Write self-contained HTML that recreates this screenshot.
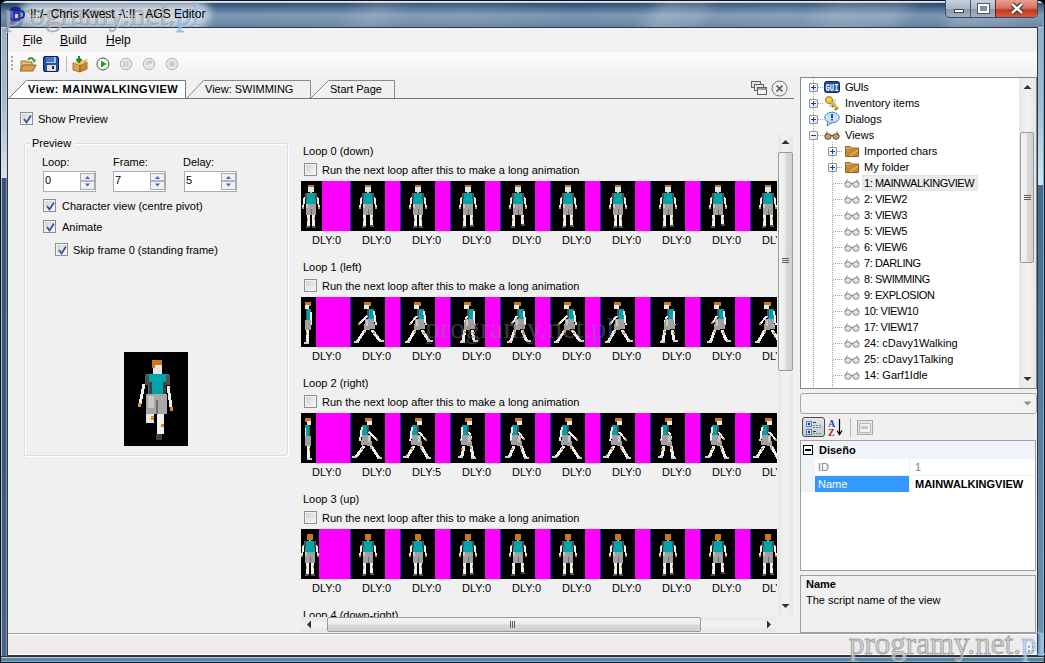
<!DOCTYPE html><html><head><meta charset="utf-8"><style>
*{margin:0;padding:0;box-sizing:border-box}
html,body{width:1045px;height:663px;overflow:hidden;background:#000}
body{font-family:"Liberation Sans",sans-serif;font-size:11px;color:#000;position:relative}
.a{position:absolute}
.t{position:absolute;white-space:nowrap;line-height:13px}
.b{font-weight:bold}
#frame{left:0;top:0;width:1045px;height:663px;border-radius:7px 7px 0 0;
background:linear-gradient(180deg,#2f4b69 0px,#4d6884 8px,#7890a8 18px,#8aa0b5 27px,#6f89a3 60%,#536e8c 100%);
border:1px solid #101820}
#glass{left:1px;top:1px;width:1043px;height:27px;border-radius:6px 6px 0 0;
background:linear-gradient(90deg,rgba(255,255,255,.0) 0%,rgba(255,255,255,.12) 8%,rgba(0,0,0,.05) 20%,rgba(255,255,255,.10) 35%,rgba(255,255,255,.18) 55%,rgba(0,20,40,.10) 70%,rgba(255,255,255,.15) 85%,rgba(255,255,255,.05) 100%)}
#client{left:7px;top:27px;width:1031px;height:629px;background:#f0f0f0;border:1px solid #2a3848}
.cb{position:absolute;width:13px;height:13px;border:1px solid #8f8f8f;background:#f4f4f4}
.cb i{position:absolute;left:1px;top:1px;width:9px;height:9px;background:linear-gradient(135deg,#cfd3d8,#f6f6f6)}
.cb svg{position:absolute;left:0;top:0}
.blk{position:absolute;top:0;height:50px;background:#000}
.nud{position:absolute;width:53px;height:21px;border:1px solid #a5acb5;background:#fff}
.nud .sp{position:absolute;right:1px;top:1px;width:15px;height:17px;border:1px solid #cdd2d7;background:linear-gradient(180deg,#f6f7f8,#e4e6e8)}
.pb{position:absolute;width:9px;height:9px;border:1px solid #959595;border-radius:1px;background:linear-gradient(135deg,#ffffff,#dfe3e8)}
.dv{position:absolute;width:1px;background-image:linear-gradient(180deg,#a0a0a0 50%,transparent 50%);background-size:1px 2px}
.dh{position:absolute;height:1px;background-image:linear-gradient(90deg,#a0a0a0 50%,transparent 50%);background-size:2px 1px}
.sbv{position:absolute;background:linear-gradient(90deg,#e6e6e6,#f0f0f0 40%,#f0f0f0 60%,#e6e6e6)}
.thumbv{position:absolute;border:1px solid #9a9a9a;border-radius:2px;background:linear-gradient(90deg,#f4f4f4 0%,#ececec 45%,#d8d8d8 55%,#d0d0d0 100%)}
.thumbh{position:absolute;border:1px solid #9a9a9a;border-radius:2px;background:linear-gradient(180deg,#f4f4f4 0%,#ececec 45%,#d8d8d8 55%,#d0d0d0 100%)}
</style></head><body>

<div class="a" style="left:0;top:0;width:1045px;height:663px;border-radius:7px 7px 0 0;background:#5a7592;border:1px solid #0c1620;overflow:hidden">
 <div class="a" style="left:0;top:0;width:1043px;height:27px;background:linear-gradient(180deg,#dce4ec 0px,#dce4ec 1px,#1c3c62 1px,#2a4a70 4px,#55759a 10px,#7290ae 14px,#6a88a6 19px,#5a7a9a 25px,#5a7a9a 26px,#c0d0e0 26px,#c0d0e0 27px)"></div>
 <div class="a" style="left:0;top:0;width:1043px;height:27px;background:linear-gradient(90deg,rgba(255,255,255,.0) 0%,rgba(255,255,255,.10) 30%,rgba(255,255,255,.14) 45%,rgba(255,255,255,.06) 55%,rgba(255,255,255,.16) 75%,rgba(255,255,255,.05) 90%,rgba(255,255,255,.12) 100%)"></div>
 <div class="a" style="left:0;top:0;width:1043px;height:27px;background:linear-gradient(120deg,transparent 0px,transparent 300px,rgba(255,255,255,.12) 330px,transparent 360px,transparent 560px,rgba(255,255,255,.2) 580px,rgba(255,255,255,.12) 610px,transparent 625px,transparent 700px,rgba(255,255,255,.15) 730px,rgba(255,255,255,.15) 780px,transparent 800px,transparent 820px,rgba(255,255,255,.18) 840px,rgba(255,255,255,.1) 880px,transparent 900px)"></div>
 <div class="a" style="left:0;top:0;width:1043px;height:27px;overflow:hidden"><div class="a" style="left:26px;top:7px;width:176px;height:13px;border-radius:6px;background:rgba(214,222,230,.9);box-shadow:0 0 9px 7px rgba(214,222,230,.85)"></div></div>
 <div class="a" style="left:0;top:27px;width:6px;height:150px;background:linear-gradient(180deg,#9cb0c6 0%,#a8bace 50%,#d8e2ea 100%)"></div>
 <div class="a" style="left:0;top:177px;width:6px;height:480px;background:linear-gradient(180deg,#3a5676,#3e5a7a 60%,#4a6686)"></div>
 <div class="a" style="left:0;top:27px;width:1px;height:630px;background:rgba(220,230,240,.7)"></div>
 <div class="a" style="left:5px;top:27px;width:1px;height:630px;background:rgba(200,215,230,.45)"></div>
 <div class="a" style="left:1036px;top:27px;width:1px;height:630px;background:rgba(200,215,230,.45)"></div>
 <div class="a" style="left:1037px;top:27px;width:6px;height:157px;background:linear-gradient(180deg,#98acc2 0%,#a8bace 50%,#dce4ec 100%)"></div>
 <div class="a" style="left:1037px;top:184px;width:6px;height:473px;background:linear-gradient(180deg,#4a6888,#5a7898 40%,#7890aa 100%)"></div>
 <div class="a" style="left:1042px;top:20px;width:1px;height:640px;background:#40c8ee"></div>
 <div class="a" style="left:0;top:655px;width:1043px;height:7px;background:linear-gradient(180deg,#2a3440 0px,#2a3440 1px,#b8c8d8 1px,#b8c8d8 2px,#6a8098 2px,#6a8098 5px,#30c8f0 5px,#30c8f0 6px,#000 6px)"></div>
 <div class="a" style="left:0;top:0;width:1043px;height:1px;background:rgba(230,236,242,.8);top:1px"></div>
</div>

<div class="a" style="left:945px;top:0;width:93px;height:18px;border:1px solid #3a4a5c;border-top:none;border-radius:0 0 5px 5px;overflow:hidden;background:linear-gradient(180deg,#c8d2dc 0%,#a8b6c4 50%,#8898a8 51%,#a0b0c0 100%)">
<div class="a" style="left:24px;top:0;width:1px;height:18px;background:#4a5a6c"></div>
<div class="a" style="left:49px;top:0;width:1px;height:18px;background:#6a2020"></div>
<div class="a" style="left:50px;top:0;width:43px;height:18px;background:linear-gradient(180deg,#e8a090 0%,#d87060 45%,#c03a20 55%,#d86040 100%)"></div>
<div class="a" style="left:8px;top:9px;width:10px;height:4px;background:#fff;border:1px solid #404850"></div>
<div class="a" style="left:32px;top:4px;width:11px;height:9px;border:2px solid #fff;outline:1px solid #505860;background:#8090a0"></div>
<svg class="a" style="left:63px;top:2px" width="16" height="13" viewBox="0 0 16 13"><path d="M3 2 L13 11 M13 2 L3 11" stroke="#3a2020" stroke-width="4.5"/><path d="M3 2 L13 11 M13 2 L3 11" stroke="#fff" stroke-width="2.6"/></svg>
</div>
<div id="client" class="a"></div>
<div class="a" style="left:8px;top:28px;width:1029px;height:24px;background:#f1f1f1"></div>
<div class="t" style="left:23px;top:34px;font-size:12px"><u>F</u>ile</div>
<div class="t" style="left:60px;top:34px;font-size:12px"><u>B</u>uild</div>
<div class="t" style="left:106px;top:34px;font-size:12px"><u>H</u>elp</div>
<div class="a" style="left:8px;top:52px;width:1029px;height:26px;background:linear-gradient(180deg,#fbfbfb 0%,#f6f6f6 50%,#f0f0f0 100%)"></div>
<div class="a" style="left:11px;top:56px;width:2px;height:2px;background:#a8a8a8"></div>
<div class="a" style="left:11px;top:60px;width:2px;height:2px;background:#a8a8a8"></div>
<div class="a" style="left:11px;top:64px;width:2px;height:2px;background:#a8a8a8"></div>
<div class="a" style="left:11px;top:68px;width:2px;height:2px;background:#a8a8a8"></div>
<div class="a" style="left:66px;top:56px;width:1px;height:16px;background:#b8b8b8"></div>
<svg class="a" style="left:20px;top:56px" width="17" height="17" viewBox="0 0 17 17"><path d="M1 5 L6 5 L7 6 L12 6 L12 14 L1 14 Z" fill="#e8c070" stroke="#a07028"/><path d="M3 9 L16 9 L13 15 L0 15 Z" fill="#d8a050" stroke="#906020"/><path d="M8 4 Q11 0 14 4" fill="none" stroke="#30a030" stroke-width="2"/><path d="M12 3 L16 4 L14 7 Z" fill="#30a030"/></svg>
<svg class="a" style="left:43px;top:56px" width="16" height="16" viewBox="0 0 16 16"><rect x="0.5" y="0.5" width="15" height="15" rx="1.5" fill="#2850a0" stroke="#102050"/><rect x="3" y="1" width="10" height="6" fill="#4a78c0"/><rect x="11" y="1" width="2" height="6" fill="#90c0f0"/><rect x="3" y="6" width="10" height="1" fill="#a0c8f0"/><rect x="4" y="9" width="9" height="6" fill="#e0e0e0"/><rect x="9" y="10" width="2" height="3" fill="#102030"/></svg>
<svg class="a" style="left:72px;top:56px" width="17" height="17" viewBox="0 0 17 17"><path d="M1 7 L8 9 L8 16 L1 14 Z" fill="#e0a050" stroke="#905818" stroke-width=".8"/><path d="M8 9 L15 6 L15 13 L8 16 Z" fill="#c88838" stroke="#905818" stroke-width=".8"/><path d="M1 7 L8 4 L15 6 L8 9 Z" fill="#f0c078"/><path d="M10 5 L16 3 L14 7 Z" fill="#e8b060"/><path d="M7 0 L7 5 M4.5 3 L7 6 L9.5 3" stroke="#208820" stroke-width="2" fill="none"/></svg>
<svg class="a" style="left:96px;top:57px" width="14" height="14" viewBox="0 0 14 14"><circle cx="7" cy="7" r="6" fill="#f4f4f4" stroke="#505050"/><path d="M5 3.5 L10.5 7 L5 10.5 Z" fill="#20a020"/></svg>
<svg class="a" style="left:119px;top:57px" width="14" height="14" viewBox="0 0 14 14"><circle cx="7" cy="7" r="5.8" fill="#e8e8e8" stroke="#b4b4b4"/><rect x="4.5" y="4" width="1.8" height="6" fill="#c8c8c8"/><rect x="7.7" y="4" width="1.8" height="6" fill="#c8c8c8"/></svg>
<svg class="a" style="left:142px;top:57px" width="14" height="14" viewBox="0 0 14 14"><circle cx="7" cy="7" r="5.8" fill="#e8e8e8" stroke="#b4b4b4"/><path d="M4 8 Q4 4 8 4 L8 2.5 L10.5 5 L8 7.5 L8 6 Q6 6 6 8 Z" fill="#c8c8c8"/></svg>
<svg class="a" style="left:165px;top:57px" width="14" height="14" viewBox="0 0 14 14"><circle cx="7" cy="7" r="5.8" fill="#e8e8e8" stroke="#b4b4b4"/><rect x="4.5" y="4.5" width="5" height="5" fill="#c8c8c8"/></svg>
<svg class="a" style="left:8px;top:79px" width="787" height="21" viewBox="0 0 787 21">
<path d="M0.5 19.5 L18.5 1.5 L177.5 1.5 L177.5 19.5" fill="#fff" stroke="#7a7a7a"/>
<path d="M178.5 19.5 L195.5 1.5 L302.5 1.5 L302.5 19.5" fill="#f0f0f0" stroke="#8a8a8a"/>
<path d="M302.5 19.5 L320.5 1.5 L386.5 1.5 L386.5 19.5" fill="#f0f0f0" stroke="#8a8a8a"/>
<path d="M0 19.5 L786 19.5" stroke="#747474"/>
</svg>
<div class="t" style="left:28px;top:83px;font-weight:bold;letter-spacing:.5px">View: MAINWALKINGVIEW</div>
<div class="t" style="left:205px;top:83px;">View: SWIMMING</div>
<div class="t" style="left:330px;top:83px;">Start Page</div>
<svg class="a" style="left:751px;top:80px" width="17" height="16" viewBox="0 0 17 16"><rect x="0.5" y="1.5" width="9" height="6" fill="#e0e0e0" stroke="#606060"/><rect x="3.5" y="4.5" width="9" height="6" fill="#e8e8e8" stroke="#606060"/><rect x="6.5" y="7.5" width="9" height="7" fill="#f4f4f4" stroke="#606060"/><rect x="7" y="8" width="8" height="2" fill="#a0a0a0"/></svg>
<svg class="a" style="left:771px;top:80px" width="17" height="17" viewBox="0 0 17 17"><circle cx="8.5" cy="8.5" r="7.5" fill="#f0f0f0" stroke="#707070"/><path d="M5.5 5.5 L11.5 11.5 M11.5 5.5 L5.5 11.5" stroke="#585858" stroke-width="1.7"/></svg>
<div class="cb" style="left:20px;top:112px"><i></i><svg width="13" height="13" viewBox="0 0 13 13"><path d="M3 6 L5.5 9.5 L10 2.5" fill="none" stroke="#3850a8" stroke-width="1.8"/></svg></div>
<div class="t" style="left:38px;top:113px;">Show Preview</div>
<div class="a" style="left:24px;top:143px;width:264px;height:313px;border:1px solid #d5dfe5;border-radius:3px;box-shadow:inset 1px 1px 0 #fff, 1px 1px 0 #fff"></div>
<div class="a" style="left:30px;top:138px;width:45px;height:12px;background:#f0f0f0"></div>
<div class="t" style="left:32px;top:137px;">Preview</div>
<div class="t" style="left:42px;top:156px;">Loop:</div>
<div class="t" style="left:113px;top:156px;">Frame:</div>
<div class="t" style="left:183px;top:156px;">Delay:</div>
<div class="nud" style="left:43px;top:171px"><svg class="a" style="left:36px;top:1px" width="15" height="17" viewBox="0 0 15 17"><rect x="0" y="0" width="15" height="17" fill="#fff"/><rect x="0.5" y="0.5" width="14" height="16" fill="#eef0f2" stroke="#a8acb2"/><rect x="1" y="7" width="13" height="2" fill="#b0b4b8"/><path d="M5 6 L7.5 3 L10 6 Z" fill="#4a64c8"/><path d="M5 10.5 L7.5 13.5 L10 10.5 Z" fill="#4a64c8"/></svg></div>
<div class="t" style="left:45px;top:174px;">0</div>
<div class="nud" style="left:113px;top:171px"><svg class="a" style="left:36px;top:1px" width="15" height="17" viewBox="0 0 15 17"><rect x="0" y="0" width="15" height="17" fill="#fff"/><rect x="0.5" y="0.5" width="14" height="16" fill="#eef0f2" stroke="#a8acb2"/><rect x="1" y="7" width="13" height="2" fill="#b0b4b8"/><path d="M5 6 L7.5 3 L10 6 Z" fill="#4a64c8"/><path d="M5 10.5 L7.5 13.5 L10 10.5 Z" fill="#4a64c8"/></svg></div>
<div class="t" style="left:115px;top:174px;">7</div>
<div class="nud" style="left:184px;top:171px"><svg class="a" style="left:36px;top:1px" width="15" height="17" viewBox="0 0 15 17"><rect x="0" y="0" width="15" height="17" fill="#fff"/><rect x="0.5" y="0.5" width="14" height="16" fill="#eef0f2" stroke="#a8acb2"/><rect x="1" y="7" width="13" height="2" fill="#b0b4b8"/><path d="M5 6 L7.5 3 L10 6 Z" fill="#4a64c8"/><path d="M5 10.5 L7.5 13.5 L10 10.5 Z" fill="#4a64c8"/></svg></div>
<div class="t" style="left:186px;top:174px;">5</div>
<div class="cb" style="left:43px;top:199px"><i></i><svg width="13" height="13" viewBox="0 0 13 13"><path d="M3 6 L5.5 9.5 L10 2.5" fill="none" stroke="#3850a8" stroke-width="1.8"/></svg></div>
<div class="t" style="left:62px;top:200px;">Character view (centre pivot)</div>
<div class="cb" style="left:43px;top:220px"><i></i><svg width="13" height="13" viewBox="0 0 13 13"><path d="M3 6 L5.5 9.5 L10 2.5" fill="none" stroke="#3850a8" stroke-width="1.8"/></svg></div>
<div class="t" style="left:62px;top:221px;">Animate</div>
<div class="cb" style="left:55px;top:243px"><i></i><svg width="13" height="13" viewBox="0 0 13 13"><path d="M3 6 L5.5 9.5 L10 2.5" fill="none" stroke="#3850a8" stroke-width="1.8"/></svg></div>
<div class="t" style="left:73px;top:244px;">Skip frame 0 (standing frame)</div>
<div class="a" style="left:124px;top:352px;width:64px;height:94px;background:#000;overflow:hidden"><svg width="64" height="94" viewBox="0 0 64 94" shape-rendering="crispEdges">
<rect x="28" y="8" width="10" height="5" fill="#c87818"/><rect x="29" y="13" width="9" height="9" fill="#e4e4e4"/><rect x="28" y="11" width="3" height="5" fill="#c87818"/>
<rect x="22" y="22" width="23" height="6" fill="#00a4a8"/><rect x="24" y="28" width="18" height="14" fill="#00a4a8"/>
<rect x="21" y="23" width="4" height="10" fill="#505050"/><rect x="42" y="23" width="4" height="10" fill="#505050"/><rect x="25" y="30" width="3" height="12" fill="#404040"/><rect x="39" y="30" width="3" height="12" fill="#404040"/>
<path d="M20 32 L16 52" stroke="#f0f0f0" stroke-width="3"/><path d="M44 34 L47 55" stroke="#f0f0f0" stroke-width="3"/>
<rect x="14" y="51" width="3" height="4" fill="#d89010"/><rect x="46" y="55" width="3" height="4" fill="#d89010"/>
<rect x="22" y="42" width="21" height="20" fill="#a8a8a8"/><rect x="24" y="44" width="6" height="12" fill="#c8c8c8"/><rect x="32" y="48" width="2" height="14" fill="#707070"/>
<rect x="22" y="62" width="8" height="9" fill="#e8e8e8"/><rect x="27" y="64" width="3" height="4" fill="#d89010"/>
<rect x="33" y="62" width="7" height="20" fill="#f0f0f0"/><rect x="37" y="72" width="3" height="3" fill="#d89010"/>
<rect x="32" y="82" width="6" height="6" fill="#404040"/>
</svg></div>
<div class="a" style="left:0;top:0;width:777px;height:617px;overflow:hidden">
<div class="t" style="left:303px;top:145px;">Loop 0 (down)</div>
<div class="cb" style="left:304px;top:163px"><i></i></div>
<div class="t" style="left:322px;top:164px;">Run the next loop after this to make a long animation</div>
<div class="a" style="left:301px;top:181px;width:476px;height:50px;overflow:hidden;background:#f0f">
<div class="blk" style="left:0;width:21px"></div>
<div class="blk" style="left:49px;width:35px;border-left:1px solid #1030d0"></div>
<div class="blk" style="left:99px;width:35px;border-left:1px solid #1030d0"></div>
<div class="blk" style="left:149px;width:35px;border-left:1px solid #1030d0"></div>
<div class="blk" style="left:199px;width:35px;border-left:1px solid #1030d0"></div>
<div class="blk" style="left:249px;width:35px;border-left:1px solid #1030d0"></div>
<div class="blk" style="left:299px;width:35px;border-left:1px solid #1030d0"></div>
<div class="blk" style="left:349px;width:35px;border-left:1px solid #1030d0"></div>
<div class="blk" style="left:399px;width:35px;border-left:1px solid #1030d0"></div>
<div class="blk" style="left:449px;width:35px;border-left:1px solid #1030d0"></div>
<svg class="a" style="left:0;top:0" width="476" height="50" shape-rendering="crispEdges"><rect x="7" y="4" width="6" height="2" fill="#c87818"/><rect x="7" y="6" width="6" height="5" fill="#e4e4e4"/><rect x="9" y="11" width="2" height="1" fill="#c0c0c0"/><rect x="4" y="12" width="12" height="4" fill="#00a4a8"/><rect x="5" y="16" width="10" height="7" fill="#00a4a8"/><rect x="4" y="12" width="2" height="6" fill="#505050"/><rect x="14" y="12" width="2" height="6" fill="#505050"/><path d="M3.5 16 L2 27" stroke="#f0f0f0" stroke-width="1.8"/><path d="M16.5 16 L18 27" stroke="#f0f0f0" stroke-width="1.8"/><rect x="1" y="26" width="2" height="2" fill="#d89010"/><rect x="17" y="26" width="2" height="2" fill="#d89010"/><rect x="5" y="23" width="10" height="11" fill="#a0a0a0"/><rect x="10" y="28" width="1" height="6" fill="#6a6a6a"/><rect x="5" y="23" width="2" height="4" fill="#c8c8c8"/><rect x="6" y="34" width="3" height="11" fill="#f0f0f0"/><rect x="11" y="34" width="3" height="11" fill="#f0f0f0"/><rect x="6" y="37" width="1" height="3" fill="#d89010"/><rect x="13" y="36" width="1" height="3" fill="#d89010"/><rect x="5" y="45" width="4" height="2" fill="#505050"/><rect x="11" y="45" width="4" height="2" fill="#505050"/><rect x="64" y="4" width="6" height="2" fill="#c87818"/><rect x="64" y="6" width="6" height="5" fill="#e4e4e4"/><rect x="66" y="11" width="2" height="1" fill="#c0c0c0"/><rect x="61" y="12" width="12" height="4" fill="#00a4a8"/><rect x="62" y="16" width="10" height="7" fill="#00a4a8"/><rect x="61" y="12" width="2" height="6" fill="#505050"/><rect x="71" y="12" width="2" height="6" fill="#505050"/><path d="M60.5 16 L59 27" stroke="#f0f0f0" stroke-width="1.8"/><path d="M73.5 16 L75 27" stroke="#f0f0f0" stroke-width="1.8"/><rect x="58" y="26" width="2" height="2" fill="#d89010"/><rect x="74" y="26" width="2" height="2" fill="#d89010"/><rect x="62" y="23" width="10" height="11" fill="#a0a0a0"/><rect x="67" y="28" width="1" height="6" fill="#6a6a6a"/><rect x="62" y="23" width="2" height="4" fill="#c8c8c8"/><rect x="62" y="34" width="3" height="11" fill="#f0f0f0"/><rect x="69" y="34" width="3" height="10" fill="#f0f0f0"/><rect x="62" y="37" width="1" height="3" fill="#d89010"/><rect x="71" y="36" width="1" height="3" fill="#d89010"/><rect x="61" y="45" width="4" height="2" fill="#505050"/><rect x="69" y="44" width="4" height="2" fill="#505050"/><rect x="114" y="4" width="6" height="2" fill="#c87818"/><rect x="114" y="6" width="6" height="5" fill="#e4e4e4"/><rect x="116" y="11" width="2" height="1" fill="#c0c0c0"/><rect x="111" y="12" width="12" height="4" fill="#00a4a8"/><rect x="112" y="16" width="10" height="7" fill="#00a4a8"/><rect x="111" y="12" width="2" height="6" fill="#505050"/><rect x="121" y="12" width="2" height="6" fill="#505050"/><path d="M110.5 16 L109 27" stroke="#f0f0f0" stroke-width="1.8"/><path d="M123.5 16 L125 27" stroke="#f0f0f0" stroke-width="1.8"/><rect x="108" y="26" width="2" height="2" fill="#d89010"/><rect x="124" y="26" width="2" height="2" fill="#d89010"/><rect x="112" y="23" width="10" height="11" fill="#a0a0a0"/><rect x="117" y="28" width="1" height="6" fill="#6a6a6a"/><rect x="112" y="23" width="2" height="4" fill="#c8c8c8"/><rect x="113" y="34" width="3" height="11" fill="#f0f0f0"/><rect x="118" y="34" width="3" height="11" fill="#f0f0f0"/><rect x="113" y="37" width="1" height="3" fill="#d89010"/><rect x="120" y="36" width="1" height="3" fill="#d89010"/><rect x="112" y="45" width="4" height="2" fill="#505050"/><rect x="118" y="45" width="4" height="2" fill="#505050"/><rect x="164" y="4" width="6" height="2" fill="#c87818"/><rect x="164" y="6" width="6" height="5" fill="#e4e4e4"/><rect x="166" y="11" width="2" height="1" fill="#c0c0c0"/><rect x="161" y="12" width="12" height="4" fill="#00a4a8"/><rect x="162" y="16" width="10" height="7" fill="#00a4a8"/><rect x="161" y="12" width="2" height="6" fill="#505050"/><rect x="171" y="12" width="2" height="6" fill="#505050"/><path d="M160.5 16 L159 27" stroke="#f0f0f0" stroke-width="1.8"/><path d="M173.5 16 L175 27" stroke="#f0f0f0" stroke-width="1.8"/><rect x="158" y="26" width="2" height="2" fill="#d89010"/><rect x="174" y="26" width="2" height="2" fill="#d89010"/><rect x="162" y="23" width="10" height="11" fill="#a0a0a0"/><rect x="167" y="28" width="1" height="6" fill="#6a6a6a"/><rect x="162" y="23" width="2" height="4" fill="#c8c8c8"/><rect x="162" y="34" width="3" height="11" fill="#f0f0f0"/><rect x="169" y="34" width="3" height="10" fill="#f0f0f0"/><rect x="162" y="37" width="1" height="3" fill="#d89010"/><rect x="171" y="36" width="1" height="3" fill="#d89010"/><rect x="161" y="45" width="4" height="2" fill="#505050"/><rect x="169" y="44" width="4" height="2" fill="#505050"/><rect x="214" y="4" width="6" height="2" fill="#c87818"/><rect x="214" y="6" width="6" height="5" fill="#e4e4e4"/><rect x="216" y="11" width="2" height="1" fill="#c0c0c0"/><rect x="211" y="12" width="12" height="4" fill="#00a4a8"/><rect x="212" y="16" width="10" height="7" fill="#00a4a8"/><rect x="211" y="12" width="2" height="6" fill="#505050"/><rect x="221" y="12" width="2" height="6" fill="#505050"/><path d="M210.5 16 L209 27" stroke="#f0f0f0" stroke-width="1.8"/><path d="M223.5 16 L225 27" stroke="#f0f0f0" stroke-width="1.8"/><rect x="208" y="26" width="2" height="2" fill="#d89010"/><rect x="224" y="26" width="2" height="2" fill="#d89010"/><rect x="212" y="23" width="10" height="11" fill="#a0a0a0"/><rect x="217" y="28" width="1" height="6" fill="#6a6a6a"/><rect x="212" y="23" width="2" height="4" fill="#c8c8c8"/><rect x="211" y="34" width="3" height="11" fill="#f0f0f0"/><rect x="220" y="34" width="3" height="9" fill="#f0f0f0"/><rect x="211" y="37" width="1" height="3" fill="#d89010"/><rect x="222" y="36" width="1" height="3" fill="#d89010"/><rect x="210" y="45" width="4" height="2" fill="#505050"/><rect x="220" y="43" width="4" height="2" fill="#505050"/><rect x="264" y="4" width="6" height="2" fill="#c87818"/><rect x="264" y="6" width="6" height="5" fill="#e4e4e4"/><rect x="266" y="11" width="2" height="1" fill="#c0c0c0"/><rect x="261" y="12" width="12" height="4" fill="#00a4a8"/><rect x="262" y="16" width="10" height="7" fill="#00a4a8"/><rect x="261" y="12" width="2" height="6" fill="#505050"/><rect x="271" y="12" width="2" height="6" fill="#505050"/><path d="M260.5 16 L259 27" stroke="#f0f0f0" stroke-width="1.8"/><path d="M273.5 16 L275 27" stroke="#f0f0f0" stroke-width="1.8"/><rect x="258" y="26" width="2" height="2" fill="#d89010"/><rect x="274" y="26" width="2" height="2" fill="#d89010"/><rect x="262" y="23" width="10" height="11" fill="#a0a0a0"/><rect x="267" y="28" width="1" height="6" fill="#6a6a6a"/><rect x="262" y="23" width="2" height="4" fill="#c8c8c8"/><rect x="262" y="34" width="3" height="11" fill="#f0f0f0"/><rect x="269" y="34" width="3" height="10" fill="#f0f0f0"/><rect x="262" y="37" width="1" height="3" fill="#d89010"/><rect x="271" y="36" width="1" height="3" fill="#d89010"/><rect x="261" y="45" width="4" height="2" fill="#505050"/><rect x="269" y="44" width="4" height="2" fill="#505050"/><rect x="314" y="4" width="6" height="2" fill="#c87818"/><rect x="314" y="6" width="6" height="5" fill="#e4e4e4"/><rect x="316" y="11" width="2" height="1" fill="#c0c0c0"/><rect x="311" y="12" width="12" height="4" fill="#00a4a8"/><rect x="312" y="16" width="10" height="7" fill="#00a4a8"/><rect x="311" y="12" width="2" height="6" fill="#505050"/><rect x="321" y="12" width="2" height="6" fill="#505050"/><path d="M310.5 16 L309 27" stroke="#f0f0f0" stroke-width="1.8"/><path d="M323.5 16 L325 27" stroke="#f0f0f0" stroke-width="1.8"/><rect x="308" y="26" width="2" height="2" fill="#d89010"/><rect x="324" y="26" width="2" height="2" fill="#d89010"/><rect x="312" y="23" width="10" height="11" fill="#a0a0a0"/><rect x="317" y="28" width="1" height="6" fill="#6a6a6a"/><rect x="312" y="23" width="2" height="4" fill="#c8c8c8"/><rect x="313" y="34" width="3" height="11" fill="#f0f0f0"/><rect x="318" y="34" width="3" height="11" fill="#f0f0f0"/><rect x="313" y="37" width="1" height="3" fill="#d89010"/><rect x="320" y="36" width="1" height="3" fill="#d89010"/><rect x="312" y="45" width="4" height="2" fill="#505050"/><rect x="318" y="45" width="4" height="2" fill="#505050"/><rect x="364" y="4" width="6" height="2" fill="#c87818"/><rect x="364" y="6" width="6" height="5" fill="#e4e4e4"/><rect x="366" y="11" width="2" height="1" fill="#c0c0c0"/><rect x="361" y="12" width="12" height="4" fill="#00a4a8"/><rect x="362" y="16" width="10" height="7" fill="#00a4a8"/><rect x="361" y="12" width="2" height="6" fill="#505050"/><rect x="371" y="12" width="2" height="6" fill="#505050"/><path d="M360.5 16 L359 27" stroke="#f0f0f0" stroke-width="1.8"/><path d="M373.5 16 L375 27" stroke="#f0f0f0" stroke-width="1.8"/><rect x="358" y="26" width="2" height="2" fill="#d89010"/><rect x="374" y="26" width="2" height="2" fill="#d89010"/><rect x="362" y="23" width="10" height="11" fill="#a0a0a0"/><rect x="367" y="28" width="1" height="6" fill="#6a6a6a"/><rect x="362" y="23" width="2" height="4" fill="#c8c8c8"/><rect x="362" y="34" width="3" height="11" fill="#f0f0f0"/><rect x="369" y="34" width="3" height="10" fill="#f0f0f0"/><rect x="362" y="37" width="1" height="3" fill="#d89010"/><rect x="371" y="36" width="1" height="3" fill="#d89010"/><rect x="361" y="45" width="4" height="2" fill="#505050"/><rect x="369" y="44" width="4" height="2" fill="#505050"/><rect x="414" y="4" width="6" height="2" fill="#c87818"/><rect x="414" y="6" width="6" height="5" fill="#e4e4e4"/><rect x="416" y="11" width="2" height="1" fill="#c0c0c0"/><rect x="411" y="12" width="12" height="4" fill="#00a4a8"/><rect x="412" y="16" width="10" height="7" fill="#00a4a8"/><rect x="411" y="12" width="2" height="6" fill="#505050"/><rect x="421" y="12" width="2" height="6" fill="#505050"/><path d="M410.5 16 L409 27" stroke="#f0f0f0" stroke-width="1.8"/><path d="M423.5 16 L425 27" stroke="#f0f0f0" stroke-width="1.8"/><rect x="408" y="26" width="2" height="2" fill="#d89010"/><rect x="424" y="26" width="2" height="2" fill="#d89010"/><rect x="412" y="23" width="10" height="11" fill="#a0a0a0"/><rect x="417" y="28" width="1" height="6" fill="#6a6a6a"/><rect x="412" y="23" width="2" height="4" fill="#c8c8c8"/><rect x="411" y="34" width="3" height="11" fill="#f0f0f0"/><rect x="420" y="34" width="3" height="9" fill="#f0f0f0"/><rect x="411" y="37" width="1" height="3" fill="#d89010"/><rect x="422" y="36" width="1" height="3" fill="#d89010"/><rect x="410" y="45" width="4" height="2" fill="#505050"/><rect x="420" y="43" width="4" height="2" fill="#505050"/><rect x="464" y="4" width="6" height="2" fill="#c87818"/><rect x="464" y="6" width="6" height="5" fill="#e4e4e4"/><rect x="466" y="11" width="2" height="1" fill="#c0c0c0"/><rect x="461" y="12" width="12" height="4" fill="#00a4a8"/><rect x="462" y="16" width="10" height="7" fill="#00a4a8"/><rect x="461" y="12" width="2" height="6" fill="#505050"/><rect x="471" y="12" width="2" height="6" fill="#505050"/><path d="M460.5 16 L459 27" stroke="#f0f0f0" stroke-width="1.8"/><path d="M473.5 16 L475 27" stroke="#f0f0f0" stroke-width="1.8"/><rect x="458" y="26" width="2" height="2" fill="#d89010"/><rect x="474" y="26" width="2" height="2" fill="#d89010"/><rect x="462" y="23" width="10" height="11" fill="#a0a0a0"/><rect x="467" y="28" width="1" height="6" fill="#6a6a6a"/><rect x="462" y="23" width="2" height="4" fill="#c8c8c8"/><rect x="462" y="34" width="3" height="11" fill="#f0f0f0"/><rect x="469" y="34" width="3" height="10" fill="#f0f0f0"/><rect x="462" y="37" width="1" height="3" fill="#d89010"/><rect x="471" y="36" width="1" height="3" fill="#d89010"/><rect x="461" y="45" width="4" height="2" fill="#505050"/><rect x="469" y="44" width="4" height="2" fill="#505050"/></svg>
</div>
<div class="t" style="left:312px;top:234px;">DLY:0</div>
<div class="t" style="left:362px;top:234px;">DLY:0</div>
<div class="t" style="left:412px;top:234px;">DLY:0</div>
<div class="t" style="left:462px;top:234px;">DLY:0</div>
<div class="t" style="left:512px;top:234px;">DLY:0</div>
<div class="t" style="left:562px;top:234px;">DLY:0</div>
<div class="t" style="left:612px;top:234px;">DLY:0</div>
<div class="t" style="left:662px;top:234px;">DLY:0</div>
<div class="t" style="left:712px;top:234px;">DLY:0</div>
<div class="t" style="left:762px;top:234px;">DLY:0</div>
<div class="t" style="left:303px;top:261px;">Loop 1 (left)</div>
<div class="cb" style="left:304px;top:279px"><i></i></div>
<div class="t" style="left:322px;top:280px;">Run the next loop after this to make a long animation</div>
<div class="a" style="left:301px;top:297px;width:476px;height:50px;overflow:hidden;background:#f0f">
<div class="blk" style="left:0;width:15px"></div>
<div class="blk" style="left:49px;width:35px;border-left:1px solid #1030d0"></div>
<div class="blk" style="left:99px;width:35px;border-left:1px solid #1030d0"></div>
<div class="blk" style="left:149px;width:35px;border-left:1px solid #1030d0"></div>
<div class="blk" style="left:199px;width:35px;border-left:1px solid #1030d0"></div>
<div class="blk" style="left:249px;width:35px;border-left:1px solid #1030d0"></div>
<div class="blk" style="left:299px;width:35px;border-left:1px solid #1030d0"></div>
<div class="blk" style="left:349px;width:35px;border-left:1px solid #1030d0"></div>
<div class="blk" style="left:399px;width:35px;border-left:1px solid #1030d0"></div>
<div class="blk" style="left:449px;width:35px;border-left:1px solid #1030d0"></div>
<svg class="a" style="left:0;top:0" width="476" height="50" shape-rendering="crispEdges"><rect x="4" y="5" width="6" height="4" fill="#c87818"/><rect x="4" y="8" width="4" height="4" fill="#e8e8e8"/><rect x="5" y="12" width="5" height="11" fill="#00a4a8"/><rect x="5" y="12" width="1" height="10" fill="#505050"/><rect x="9" y="15" width="1.5" height="13" fill="#f0f0f0"/><rect x="4" y="23" width="6" height="10" fill="#a0a0a0"/><rect x="5" y="33" width="3" height="12" fill="#f0f0f0"/><rect x="5" y="35" width="1" height="3" fill="#d89010"/><rect x="3" y="45" width="5" height="2" fill="#d0d0d0"/><rect x="63" y="5" width="7" height="4" fill="#c87818"/><rect x="63" y="8" width="5" height="4" fill="#e8e8e8"/><rect x="67" y="12" width="6" height="10" fill="#00a4a8"/><rect x="66" y="12" width="2" height="9" fill="#505050"/><path d="M66 19 L58.0 27.0" stroke="#f0f0f0" stroke-width="2"/><rect x="57.0" y="26.0" width="2" height="2" fill="#d89010"/><path d="M73 14 L75.0 28" stroke="#f0f0f0" stroke-width="2"/><path d="M64 22 L73 22 L74 32 L63 33 Z" fill="#a0a0a0"/><rect x="65" y="23" width="2" height="6" fill="#c8c8c8"/><path d="M64 33 L56.0 45" stroke="#f0f0f0" stroke-width="3"/><path d="M71 33 L79.0 44" stroke="#f0f0f0" stroke-width="3"/><rect x="53.0" y="44" width="5" height="2" fill="#d0d0d0"/><rect x="78.0" y="43" width="5" height="2" fill="#d0d0d0"/><rect x="63" y="34" width="2" height="2" fill="#d89010"/><rect x="72" y="35" width="2" height="2" fill="#d89010"/><rect x="113" y="5" width="7" height="4" fill="#c87818"/><rect x="113" y="8" width="5" height="4" fill="#e8e8e8"/><rect x="117" y="12" width="6" height="10" fill="#00a4a8"/><rect x="116" y="12" width="2" height="9" fill="#505050"/><path d="M116 19 L109.14285714285714 26.714285714285715" stroke="#f0f0f0" stroke-width="2"/><rect x="108.14285714285714" y="25.714285714285715" width="2" height="2" fill="#d89010"/><path d="M123 14 L124.71428571428571 28" stroke="#f0f0f0" stroke-width="2"/><path d="M114 22 L123 22 L124 32 L113 33 Z" fill="#a0a0a0"/><rect x="115" y="23" width="2" height="6" fill="#c8c8c8"/><path d="M114 33 L107.14285714285714 45" stroke="#f0f0f0" stroke-width="3"/><path d="M121 33 L127.85714285714286 44" stroke="#f0f0f0" stroke-width="3"/><rect x="104.14285714285714" y="44" width="5" height="2" fill="#d0d0d0"/><rect x="126.85714285714286" y="43" width="5" height="2" fill="#d0d0d0"/><rect x="113" y="34" width="2" height="2" fill="#d89010"/><rect x="122" y="35" width="2" height="2" fill="#d89010"/><rect x="163" y="5" width="7" height="4" fill="#c87818"/><rect x="163" y="8" width="5" height="4" fill="#e8e8e8"/><rect x="167" y="12" width="6" height="10" fill="#00a4a8"/><rect x="166" y="12" width="2" height="9" fill="#505050"/><path d="M166 19 L163.71428571428572 25.571428571428573" stroke="#f0f0f0" stroke-width="2"/><rect x="162.71428571428572" y="24.571428571428573" width="2" height="2" fill="#d89010"/><path d="M173 14 L173.57142857142858 28" stroke="#f0f0f0" stroke-width="2"/><path d="M164 22 L173 22 L174 32 L163 33 Z" fill="#a0a0a0"/><rect x="165" y="23" width="2" height="6" fill="#c8c8c8"/><path d="M164 33 L161.71428571428572 45" stroke="#f0f0f0" stroke-width="3"/><path d="M171 33 L173.28571428571428 44" stroke="#f0f0f0" stroke-width="3"/><rect x="158.71428571428572" y="44" width="5" height="2" fill="#d0d0d0"/><rect x="172.28571428571428" y="43" width="5" height="2" fill="#d0d0d0"/><rect x="163" y="34" width="2" height="2" fill="#d89010"/><rect x="172" y="35" width="2" height="2" fill="#d89010"/><rect x="213" y="5" width="7" height="4" fill="#c87818"/><rect x="213" y="8" width="5" height="4" fill="#e8e8e8"/><rect x="217" y="12" width="6" height="10" fill="#00a4a8"/><rect x="216" y="12" width="2" height="9" fill="#505050"/><path d="M216 19 L211.42857142857142 26.142857142857142" stroke="#f0f0f0" stroke-width="2"/><rect x="210.42857142857142" y="25.142857142857142" width="2" height="2" fill="#d89010"/><path d="M223 14 L224.14285714285714 28" stroke="#f0f0f0" stroke-width="2"/><path d="M214 22 L223 22 L224 32 L213 33 Z" fill="#a0a0a0"/><rect x="215" y="23" width="2" height="6" fill="#c8c8c8"/><path d="M214 33 L209.42857142857142 45" stroke="#f0f0f0" stroke-width="3"/><path d="M221 33 L225.57142857142858 44" stroke="#f0f0f0" stroke-width="3"/><rect x="206.42857142857142" y="44" width="5" height="2" fill="#d0d0d0"/><rect x="224.57142857142858" y="43" width="5" height="2" fill="#d0d0d0"/><rect x="213" y="34" width="2" height="2" fill="#d89010"/><rect x="222" y="35" width="2" height="2" fill="#d89010"/><rect x="263" y="5" width="7" height="4" fill="#c87818"/><rect x="263" y="8" width="5" height="4" fill="#e8e8e8"/><rect x="267" y="12" width="6" height="10" fill="#00a4a8"/><rect x="266" y="12" width="2" height="9" fill="#505050"/><path d="M266 19 L258.0 27.0" stroke="#f0f0f0" stroke-width="2"/><rect x="257.0" y="26.0" width="2" height="2" fill="#d89010"/><path d="M273 14 L275.0 28" stroke="#f0f0f0" stroke-width="2"/><path d="M264 22 L273 22 L274 32 L263 33 Z" fill="#a0a0a0"/><rect x="265" y="23" width="2" height="6" fill="#c8c8c8"/><path d="M264 33 L256.0 45" stroke="#f0f0f0" stroke-width="3"/><path d="M271 33 L279.0 44" stroke="#f0f0f0" stroke-width="3"/><rect x="253.0" y="44" width="5" height="2" fill="#d0d0d0"/><rect x="278.0" y="43" width="5" height="2" fill="#d0d0d0"/><rect x="263" y="34" width="2" height="2" fill="#d89010"/><rect x="272" y="35" width="2" height="2" fill="#d89010"/><rect x="313" y="5" width="7" height="4" fill="#c87818"/><rect x="313" y="8" width="5" height="4" fill="#e8e8e8"/><rect x="317" y="12" width="6" height="10" fill="#00a4a8"/><rect x="316" y="12" width="2" height="9" fill="#505050"/><path d="M316 19 L309.14285714285717 26.714285714285715" stroke="#f0f0f0" stroke-width="2"/><rect x="308.14285714285717" y="25.714285714285715" width="2" height="2" fill="#d89010"/><path d="M323 14 L324.7142857142857 28" stroke="#f0f0f0" stroke-width="2"/><path d="M314 22 L323 22 L324 32 L313 33 Z" fill="#a0a0a0"/><rect x="315" y="23" width="2" height="6" fill="#c8c8c8"/><path d="M314 33 L307.14285714285717 45" stroke="#f0f0f0" stroke-width="3"/><path d="M321 33 L327.85714285714283 44" stroke="#f0f0f0" stroke-width="3"/><rect x="304.14285714285717" y="44" width="5" height="2" fill="#d0d0d0"/><rect x="326.85714285714283" y="43" width="5" height="2" fill="#d0d0d0"/><rect x="313" y="34" width="2" height="2" fill="#d89010"/><rect x="322" y="35" width="2" height="2" fill="#d89010"/><rect x="363" y="5" width="7" height="4" fill="#c87818"/><rect x="363" y="8" width="5" height="4" fill="#e8e8e8"/><rect x="367" y="12" width="6" height="10" fill="#00a4a8"/><rect x="366" y="12" width="2" height="9" fill="#505050"/><path d="M366 19 L363.7142857142857 25.571428571428573" stroke="#f0f0f0" stroke-width="2"/><rect x="362.7142857142857" y="24.571428571428573" width="2" height="2" fill="#d89010"/><path d="M373 14 L373.57142857142856 28" stroke="#f0f0f0" stroke-width="2"/><path d="M364 22 L373 22 L374 32 L363 33 Z" fill="#a0a0a0"/><rect x="365" y="23" width="2" height="6" fill="#c8c8c8"/><path d="M364 33 L361.7142857142857 45" stroke="#f0f0f0" stroke-width="3"/><path d="M371 33 L373.2857142857143 44" stroke="#f0f0f0" stroke-width="3"/><rect x="358.7142857142857" y="44" width="5" height="2" fill="#d0d0d0"/><rect x="372.2857142857143" y="43" width="5" height="2" fill="#d0d0d0"/><rect x="363" y="34" width="2" height="2" fill="#d89010"/><rect x="372" y="35" width="2" height="2" fill="#d89010"/><rect x="413" y="5" width="7" height="4" fill="#c87818"/><rect x="413" y="8" width="5" height="4" fill="#e8e8e8"/><rect x="417" y="12" width="6" height="10" fill="#00a4a8"/><rect x="416" y="12" width="2" height="9" fill="#505050"/><path d="M416 19 L411.42857142857144 26.142857142857142" stroke="#f0f0f0" stroke-width="2"/><rect x="410.42857142857144" y="25.142857142857142" width="2" height="2" fill="#d89010"/><path d="M423 14 L424.14285714285717 28" stroke="#f0f0f0" stroke-width="2"/><path d="M414 22 L423 22 L424 32 L413 33 Z" fill="#a0a0a0"/><rect x="415" y="23" width="2" height="6" fill="#c8c8c8"/><path d="M414 33 L409.42857142857144 45" stroke="#f0f0f0" stroke-width="3"/><path d="M421 33 L425.57142857142856 44" stroke="#f0f0f0" stroke-width="3"/><rect x="406.42857142857144" y="44" width="5" height="2" fill="#d0d0d0"/><rect x="424.57142857142856" y="43" width="5" height="2" fill="#d0d0d0"/><rect x="413" y="34" width="2" height="2" fill="#d89010"/><rect x="422" y="35" width="2" height="2" fill="#d89010"/><rect x="463" y="5" width="7" height="4" fill="#c87818"/><rect x="463" y="8" width="5" height="4" fill="#e8e8e8"/><rect x="467" y="12" width="6" height="10" fill="#00a4a8"/><rect x="466" y="12" width="2" height="9" fill="#505050"/><path d="M466 19 L459.14285714285717 26.714285714285715" stroke="#f0f0f0" stroke-width="2"/><rect x="458.14285714285717" y="25.714285714285715" width="2" height="2" fill="#d89010"/><path d="M473 14 L474.7142857142857 28" stroke="#f0f0f0" stroke-width="2"/><path d="M464 22 L473 22 L474 32 L463 33 Z" fill="#a0a0a0"/><rect x="465" y="23" width="2" height="6" fill="#c8c8c8"/><path d="M464 33 L457.14285714285717 45" stroke="#f0f0f0" stroke-width="3"/><path d="M471 33 L477.85714285714283 44" stroke="#f0f0f0" stroke-width="3"/><rect x="454.14285714285717" y="44" width="5" height="2" fill="#d0d0d0"/><rect x="476.85714285714283" y="43" width="5" height="2" fill="#d0d0d0"/><rect x="463" y="34" width="2" height="2" fill="#d89010"/><rect x="472" y="35" width="2" height="2" fill="#d89010"/></svg>
</div>
<div class="t" style="left:312px;top:350px;">DLY:0</div>
<div class="t" style="left:362px;top:350px;">DLY:0</div>
<div class="t" style="left:412px;top:350px;">DLY:0</div>
<div class="t" style="left:462px;top:350px;">DLY:0</div>
<div class="t" style="left:512px;top:350px;">DLY:0</div>
<div class="t" style="left:562px;top:350px;">DLY:0</div>
<div class="t" style="left:612px;top:350px;">DLY:0</div>
<div class="t" style="left:662px;top:350px;">DLY:0</div>
<div class="t" style="left:712px;top:350px;">DLY:0</div>
<div class="t" style="left:762px;top:350px;">DLY:0</div>
<div class="t" style="left:303px;top:377px;">Loop 2 (right)</div>
<div class="cb" style="left:304px;top:395px"><i></i></div>
<div class="t" style="left:322px;top:396px;">Run the next loop after this to make a long animation</div>
<div class="a" style="left:301px;top:413px;width:476px;height:50px;overflow:hidden;background:#f0f">
<div class="blk" style="left:0;width:15px"></div>
<div class="blk" style="left:49px;width:35px;border-left:1px solid #1030d0"></div>
<div class="blk" style="left:99px;width:35px;border-left:1px solid #1030d0"></div>
<div class="blk" style="left:149px;width:35px;border-left:1px solid #1030d0"></div>
<div class="blk" style="left:199px;width:35px;border-left:1px solid #1030d0"></div>
<div class="blk" style="left:249px;width:35px;border-left:1px solid #1030d0"></div>
<div class="blk" style="left:299px;width:35px;border-left:1px solid #1030d0"></div>
<div class="blk" style="left:349px;width:35px;border-left:1px solid #1030d0"></div>
<div class="blk" style="left:399px;width:35px;border-left:1px solid #1030d0"></div>
<div class="blk" style="left:449px;width:35px;border-left:1px solid #1030d0"></div>
<svg class="a" style="left:0;top:0" width="476" height="50" shape-rendering="crispEdges"><g transform="translate(14,0) scale(-1,1)"><rect x="4" y="5" width="6" height="4" fill="#c87818"/><rect x="4" y="8" width="4" height="4" fill="#e8e8e8"/><rect x="5" y="12" width="5" height="11" fill="#00a4a8"/><rect x="5" y="12" width="1" height="10" fill="#505050"/><rect x="9" y="15" width="1.5" height="13" fill="#f0f0f0"/><rect x="4" y="23" width="6" height="10" fill="#a0a0a0"/><rect x="5" y="33" width="3" height="12" fill="#f0f0f0"/><rect x="5" y="35" width="1" height="3" fill="#d89010"/><rect x="3" y="45" width="5" height="2" fill="#d0d0d0"/></g><g transform="translate(134,0) scale(-1,1)"><rect x="63" y="5" width="7" height="4" fill="#c87818"/><rect x="63" y="8" width="5" height="4" fill="#e8e8e8"/><rect x="67" y="12" width="6" height="10" fill="#00a4a8"/><rect x="66" y="12" width="2" height="9" fill="#505050"/><path d="M66 19 L58.0 27.0" stroke="#f0f0f0" stroke-width="2"/><rect x="57.0" y="26.0" width="2" height="2" fill="#d89010"/><path d="M73 14 L75.0 28" stroke="#f0f0f0" stroke-width="2"/><path d="M64 22 L73 22 L74 32 L63 33 Z" fill="#a0a0a0"/><rect x="65" y="23" width="2" height="6" fill="#c8c8c8"/><path d="M64 33 L56.0 45" stroke="#f0f0f0" stroke-width="3"/><path d="M71 33 L79.0 44" stroke="#f0f0f0" stroke-width="3"/><rect x="53.0" y="44" width="5" height="2" fill="#d0d0d0"/><rect x="78.0" y="43" width="5" height="2" fill="#d0d0d0"/><rect x="63" y="34" width="2" height="2" fill="#d89010"/><rect x="72" y="35" width="2" height="2" fill="#d89010"/></g><g transform="translate(234,0) scale(-1,1)"><rect x="113" y="5" width="7" height="4" fill="#c87818"/><rect x="113" y="8" width="5" height="4" fill="#e8e8e8"/><rect x="117" y="12" width="6" height="10" fill="#00a4a8"/><rect x="116" y="12" width="2" height="9" fill="#505050"/><path d="M116 19 L109.14285714285714 26.714285714285715" stroke="#f0f0f0" stroke-width="2"/><rect x="108.14285714285714" y="25.714285714285715" width="2" height="2" fill="#d89010"/><path d="M123 14 L124.71428571428571 28" stroke="#f0f0f0" stroke-width="2"/><path d="M114 22 L123 22 L124 32 L113 33 Z" fill="#a0a0a0"/><rect x="115" y="23" width="2" height="6" fill="#c8c8c8"/><path d="M114 33 L107.14285714285714 45" stroke="#f0f0f0" stroke-width="3"/><path d="M121 33 L127.85714285714286 44" stroke="#f0f0f0" stroke-width="3"/><rect x="104.14285714285714" y="44" width="5" height="2" fill="#d0d0d0"/><rect x="126.85714285714286" y="43" width="5" height="2" fill="#d0d0d0"/><rect x="113" y="34" width="2" height="2" fill="#d89010"/><rect x="122" y="35" width="2" height="2" fill="#d89010"/></g><g transform="translate(334,0) scale(-1,1)"><rect x="163" y="5" width="7" height="4" fill="#c87818"/><rect x="163" y="8" width="5" height="4" fill="#e8e8e8"/><rect x="167" y="12" width="6" height="10" fill="#00a4a8"/><rect x="166" y="12" width="2" height="9" fill="#505050"/><path d="M166 19 L163.71428571428572 25.571428571428573" stroke="#f0f0f0" stroke-width="2"/><rect x="162.71428571428572" y="24.571428571428573" width="2" height="2" fill="#d89010"/><path d="M173 14 L173.57142857142858 28" stroke="#f0f0f0" stroke-width="2"/><path d="M164 22 L173 22 L174 32 L163 33 Z" fill="#a0a0a0"/><rect x="165" y="23" width="2" height="6" fill="#c8c8c8"/><path d="M164 33 L161.71428571428572 45" stroke="#f0f0f0" stroke-width="3"/><path d="M171 33 L173.28571428571428 44" stroke="#f0f0f0" stroke-width="3"/><rect x="158.71428571428572" y="44" width="5" height="2" fill="#d0d0d0"/><rect x="172.28571428571428" y="43" width="5" height="2" fill="#d0d0d0"/><rect x="163" y="34" width="2" height="2" fill="#d89010"/><rect x="172" y="35" width="2" height="2" fill="#d89010"/></g><g transform="translate(434,0) scale(-1,1)"><rect x="213" y="5" width="7" height="4" fill="#c87818"/><rect x="213" y="8" width="5" height="4" fill="#e8e8e8"/><rect x="217" y="12" width="6" height="10" fill="#00a4a8"/><rect x="216" y="12" width="2" height="9" fill="#505050"/><path d="M216 19 L211.42857142857142 26.142857142857142" stroke="#f0f0f0" stroke-width="2"/><rect x="210.42857142857142" y="25.142857142857142" width="2" height="2" fill="#d89010"/><path d="M223 14 L224.14285714285714 28" stroke="#f0f0f0" stroke-width="2"/><path d="M214 22 L223 22 L224 32 L213 33 Z" fill="#a0a0a0"/><rect x="215" y="23" width="2" height="6" fill="#c8c8c8"/><path d="M214 33 L209.42857142857142 45" stroke="#f0f0f0" stroke-width="3"/><path d="M221 33 L225.57142857142858 44" stroke="#f0f0f0" stroke-width="3"/><rect x="206.42857142857142" y="44" width="5" height="2" fill="#d0d0d0"/><rect x="224.57142857142858" y="43" width="5" height="2" fill="#d0d0d0"/><rect x="213" y="34" width="2" height="2" fill="#d89010"/><rect x="222" y="35" width="2" height="2" fill="#d89010"/></g><g transform="translate(534,0) scale(-1,1)"><rect x="263" y="5" width="7" height="4" fill="#c87818"/><rect x="263" y="8" width="5" height="4" fill="#e8e8e8"/><rect x="267" y="12" width="6" height="10" fill="#00a4a8"/><rect x="266" y="12" width="2" height="9" fill="#505050"/><path d="M266 19 L258.0 27.0" stroke="#f0f0f0" stroke-width="2"/><rect x="257.0" y="26.0" width="2" height="2" fill="#d89010"/><path d="M273 14 L275.0 28" stroke="#f0f0f0" stroke-width="2"/><path d="M264 22 L273 22 L274 32 L263 33 Z" fill="#a0a0a0"/><rect x="265" y="23" width="2" height="6" fill="#c8c8c8"/><path d="M264 33 L256.0 45" stroke="#f0f0f0" stroke-width="3"/><path d="M271 33 L279.0 44" stroke="#f0f0f0" stroke-width="3"/><rect x="253.0" y="44" width="5" height="2" fill="#d0d0d0"/><rect x="278.0" y="43" width="5" height="2" fill="#d0d0d0"/><rect x="263" y="34" width="2" height="2" fill="#d89010"/><rect x="272" y="35" width="2" height="2" fill="#d89010"/></g><g transform="translate(634,0) scale(-1,1)"><rect x="313" y="5" width="7" height="4" fill="#c87818"/><rect x="313" y="8" width="5" height="4" fill="#e8e8e8"/><rect x="317" y="12" width="6" height="10" fill="#00a4a8"/><rect x="316" y="12" width="2" height="9" fill="#505050"/><path d="M316 19 L309.14285714285717 26.714285714285715" stroke="#f0f0f0" stroke-width="2"/><rect x="308.14285714285717" y="25.714285714285715" width="2" height="2" fill="#d89010"/><path d="M323 14 L324.7142857142857 28" stroke="#f0f0f0" stroke-width="2"/><path d="M314 22 L323 22 L324 32 L313 33 Z" fill="#a0a0a0"/><rect x="315" y="23" width="2" height="6" fill="#c8c8c8"/><path d="M314 33 L307.14285714285717 45" stroke="#f0f0f0" stroke-width="3"/><path d="M321 33 L327.85714285714283 44" stroke="#f0f0f0" stroke-width="3"/><rect x="304.14285714285717" y="44" width="5" height="2" fill="#d0d0d0"/><rect x="326.85714285714283" y="43" width="5" height="2" fill="#d0d0d0"/><rect x="313" y="34" width="2" height="2" fill="#d89010"/><rect x="322" y="35" width="2" height="2" fill="#d89010"/></g><g transform="translate(734,0) scale(-1,1)"><rect x="363" y="5" width="7" height="4" fill="#c87818"/><rect x="363" y="8" width="5" height="4" fill="#e8e8e8"/><rect x="367" y="12" width="6" height="10" fill="#00a4a8"/><rect x="366" y="12" width="2" height="9" fill="#505050"/><path d="M366 19 L363.7142857142857 25.571428571428573" stroke="#f0f0f0" stroke-width="2"/><rect x="362.7142857142857" y="24.571428571428573" width="2" height="2" fill="#d89010"/><path d="M373 14 L373.57142857142856 28" stroke="#f0f0f0" stroke-width="2"/><path d="M364 22 L373 22 L374 32 L363 33 Z" fill="#a0a0a0"/><rect x="365" y="23" width="2" height="6" fill="#c8c8c8"/><path d="M364 33 L361.7142857142857 45" stroke="#f0f0f0" stroke-width="3"/><path d="M371 33 L373.2857142857143 44" stroke="#f0f0f0" stroke-width="3"/><rect x="358.7142857142857" y="44" width="5" height="2" fill="#d0d0d0"/><rect x="372.2857142857143" y="43" width="5" height="2" fill="#d0d0d0"/><rect x="363" y="34" width="2" height="2" fill="#d89010"/><rect x="372" y="35" width="2" height="2" fill="#d89010"/></g><g transform="translate(834,0) scale(-1,1)"><rect x="413" y="5" width="7" height="4" fill="#c87818"/><rect x="413" y="8" width="5" height="4" fill="#e8e8e8"/><rect x="417" y="12" width="6" height="10" fill="#00a4a8"/><rect x="416" y="12" width="2" height="9" fill="#505050"/><path d="M416 19 L411.42857142857144 26.142857142857142" stroke="#f0f0f0" stroke-width="2"/><rect x="410.42857142857144" y="25.142857142857142" width="2" height="2" fill="#d89010"/><path d="M423 14 L424.14285714285717 28" stroke="#f0f0f0" stroke-width="2"/><path d="M414 22 L423 22 L424 32 L413 33 Z" fill="#a0a0a0"/><rect x="415" y="23" width="2" height="6" fill="#c8c8c8"/><path d="M414 33 L409.42857142857144 45" stroke="#f0f0f0" stroke-width="3"/><path d="M421 33 L425.57142857142856 44" stroke="#f0f0f0" stroke-width="3"/><rect x="406.42857142857144" y="44" width="5" height="2" fill="#d0d0d0"/><rect x="424.57142857142856" y="43" width="5" height="2" fill="#d0d0d0"/><rect x="413" y="34" width="2" height="2" fill="#d89010"/><rect x="422" y="35" width="2" height="2" fill="#d89010"/></g><g transform="translate(934,0) scale(-1,1)"><rect x="463" y="5" width="7" height="4" fill="#c87818"/><rect x="463" y="8" width="5" height="4" fill="#e8e8e8"/><rect x="467" y="12" width="6" height="10" fill="#00a4a8"/><rect x="466" y="12" width="2" height="9" fill="#505050"/><path d="M466 19 L459.14285714285717 26.714285714285715" stroke="#f0f0f0" stroke-width="2"/><rect x="458.14285714285717" y="25.714285714285715" width="2" height="2" fill="#d89010"/><path d="M473 14 L474.7142857142857 28" stroke="#f0f0f0" stroke-width="2"/><path d="M464 22 L473 22 L474 32 L463 33 Z" fill="#a0a0a0"/><rect x="465" y="23" width="2" height="6" fill="#c8c8c8"/><path d="M464 33 L457.14285714285717 45" stroke="#f0f0f0" stroke-width="3"/><path d="M471 33 L477.85714285714283 44" stroke="#f0f0f0" stroke-width="3"/><rect x="454.14285714285717" y="44" width="5" height="2" fill="#d0d0d0"/><rect x="476.85714285714283" y="43" width="5" height="2" fill="#d0d0d0"/><rect x="463" y="34" width="2" height="2" fill="#d89010"/><rect x="472" y="35" width="2" height="2" fill="#d89010"/></g></svg>
</div>
<div class="t" style="left:312px;top:466px;">DLY:0</div>
<div class="t" style="left:362px;top:466px;">DLY:0</div>
<div class="t" style="left:412px;top:466px;">DLY:5</div>
<div class="t" style="left:462px;top:466px;">DLY:0</div>
<div class="t" style="left:512px;top:466px;">DLY:0</div>
<div class="t" style="left:562px;top:466px;">DLY:0</div>
<div class="t" style="left:612px;top:466px;">DLY:0</div>
<div class="t" style="left:662px;top:466px;">DLY:0</div>
<div class="t" style="left:712px;top:466px;">DLY:0</div>
<div class="t" style="left:762px;top:466px;">DLY:0</div>
<div class="t" style="left:303px;top:493px;">Loop 3 (up)</div>
<div class="cb" style="left:304px;top:511px"><i></i></div>
<div class="t" style="left:322px;top:512px;">Run the next loop after this to make a long animation</div>
<div class="a" style="left:301px;top:529px;width:476px;height:50px;overflow:hidden;background:#f0f">
<div class="blk" style="left:0;width:18px"></div>
<div class="blk" style="left:49px;width:35px;border-left:1px solid #1030d0"></div>
<div class="blk" style="left:99px;width:35px;border-left:1px solid #1030d0"></div>
<div class="blk" style="left:149px;width:35px;border-left:1px solid #1030d0"></div>
<div class="blk" style="left:199px;width:35px;border-left:1px solid #1030d0"></div>
<div class="blk" style="left:249px;width:35px;border-left:1px solid #1030d0"></div>
<div class="blk" style="left:299px;width:35px;border-left:1px solid #1030d0"></div>
<div class="blk" style="left:349px;width:35px;border-left:1px solid #1030d0"></div>
<div class="blk" style="left:399px;width:35px;border-left:1px solid #1030d0"></div>
<div class="blk" style="left:449px;width:35px;border-left:1px solid #1030d0"></div>
<svg class="a" style="left:0;top:0" width="476" height="50" shape-rendering="crispEdges"><rect x="6" y="5" width="6" height="6" fill="#c87818"/><rect x="8" y="11" width="2" height="1" fill="#c0c0c0"/><rect x="3" y="12" width="12" height="4" fill="#00a4a8"/><rect x="4" y="16" width="10" height="7" fill="#00a4a8"/><rect x="3" y="12" width="2" height="6" fill="#505050"/><rect x="13" y="12" width="2" height="6" fill="#505050"/><path d="M2.5 16 L1 27" stroke="#f0f0f0" stroke-width="1.8"/><path d="M15.5 16 L17 27" stroke="#f0f0f0" stroke-width="1.8"/><rect x="0" y="26" width="2" height="2" fill="#d89010"/><rect x="16" y="26" width="2" height="2" fill="#d89010"/><rect x="4" y="23" width="10" height="11" fill="#a0a0a0"/><rect x="9" y="28" width="1" height="6" fill="#6a6a6a"/><rect x="4" y="23" width="2" height="4" fill="#c8c8c8"/><rect x="5" y="34" width="3" height="11" fill="#f0f0f0"/><rect x="10" y="34" width="3" height="11" fill="#f0f0f0"/><rect x="5" y="37" width="1" height="3" fill="#d89010"/><rect x="12" y="36" width="1" height="3" fill="#d89010"/><rect x="4" y="45" width="4" height="2" fill="#505050"/><rect x="10" y="45" width="4" height="2" fill="#505050"/><rect x="64" y="5" width="6" height="6" fill="#c87818"/><rect x="66" y="11" width="2" height="1" fill="#c0c0c0"/><rect x="61" y="12" width="12" height="4" fill="#00a4a8"/><rect x="62" y="16" width="10" height="7" fill="#00a4a8"/><rect x="61" y="12" width="2" height="6" fill="#505050"/><rect x="71" y="12" width="2" height="6" fill="#505050"/><path d="M60.5 16 L59 27" stroke="#f0f0f0" stroke-width="1.8"/><path d="M73.5 16 L75 27" stroke="#f0f0f0" stroke-width="1.8"/><rect x="58" y="26" width="2" height="2" fill="#d89010"/><rect x="74" y="26" width="2" height="2" fill="#d89010"/><rect x="62" y="23" width="10" height="11" fill="#a0a0a0"/><rect x="67" y="28" width="1" height="6" fill="#6a6a6a"/><rect x="62" y="23" width="2" height="4" fill="#c8c8c8"/><rect x="62" y="34" width="3" height="11" fill="#f0f0f0"/><rect x="69" y="34" width="3" height="10" fill="#f0f0f0"/><rect x="62" y="37" width="1" height="3" fill="#d89010"/><rect x="71" y="36" width="1" height="3" fill="#d89010"/><rect x="61" y="45" width="4" height="2" fill="#505050"/><rect x="69" y="44" width="4" height="2" fill="#505050"/><rect x="114" y="5" width="6" height="6" fill="#c87818"/><rect x="116" y="11" width="2" height="1" fill="#c0c0c0"/><rect x="111" y="12" width="12" height="4" fill="#00a4a8"/><rect x="112" y="16" width="10" height="7" fill="#00a4a8"/><rect x="111" y="12" width="2" height="6" fill="#505050"/><rect x="121" y="12" width="2" height="6" fill="#505050"/><path d="M110.5 16 L109 27" stroke="#f0f0f0" stroke-width="1.8"/><path d="M123.5 16 L125 27" stroke="#f0f0f0" stroke-width="1.8"/><rect x="108" y="26" width="2" height="2" fill="#d89010"/><rect x="124" y="26" width="2" height="2" fill="#d89010"/><rect x="112" y="23" width="10" height="11" fill="#a0a0a0"/><rect x="117" y="28" width="1" height="6" fill="#6a6a6a"/><rect x="112" y="23" width="2" height="4" fill="#c8c8c8"/><rect x="113" y="34" width="3" height="11" fill="#f0f0f0"/><rect x="118" y="34" width="3" height="11" fill="#f0f0f0"/><rect x="113" y="37" width="1" height="3" fill="#d89010"/><rect x="120" y="36" width="1" height="3" fill="#d89010"/><rect x="112" y="45" width="4" height="2" fill="#505050"/><rect x="118" y="45" width="4" height="2" fill="#505050"/><rect x="164" y="5" width="6" height="6" fill="#c87818"/><rect x="166" y="11" width="2" height="1" fill="#c0c0c0"/><rect x="161" y="12" width="12" height="4" fill="#00a4a8"/><rect x="162" y="16" width="10" height="7" fill="#00a4a8"/><rect x="161" y="12" width="2" height="6" fill="#505050"/><rect x="171" y="12" width="2" height="6" fill="#505050"/><path d="M160.5 16 L159 27" stroke="#f0f0f0" stroke-width="1.8"/><path d="M173.5 16 L175 27" stroke="#f0f0f0" stroke-width="1.8"/><rect x="158" y="26" width="2" height="2" fill="#d89010"/><rect x="174" y="26" width="2" height="2" fill="#d89010"/><rect x="162" y="23" width="10" height="11" fill="#a0a0a0"/><rect x="167" y="28" width="1" height="6" fill="#6a6a6a"/><rect x="162" y="23" width="2" height="4" fill="#c8c8c8"/><rect x="162" y="34" width="3" height="11" fill="#f0f0f0"/><rect x="169" y="34" width="3" height="10" fill="#f0f0f0"/><rect x="162" y="37" width="1" height="3" fill="#d89010"/><rect x="171" y="36" width="1" height="3" fill="#d89010"/><rect x="161" y="45" width="4" height="2" fill="#505050"/><rect x="169" y="44" width="4" height="2" fill="#505050"/><rect x="214" y="5" width="6" height="6" fill="#c87818"/><rect x="216" y="11" width="2" height="1" fill="#c0c0c0"/><rect x="211" y="12" width="12" height="4" fill="#00a4a8"/><rect x="212" y="16" width="10" height="7" fill="#00a4a8"/><rect x="211" y="12" width="2" height="6" fill="#505050"/><rect x="221" y="12" width="2" height="6" fill="#505050"/><path d="M210.5 16 L209 27" stroke="#f0f0f0" stroke-width="1.8"/><path d="M223.5 16 L225 27" stroke="#f0f0f0" stroke-width="1.8"/><rect x="208" y="26" width="2" height="2" fill="#d89010"/><rect x="224" y="26" width="2" height="2" fill="#d89010"/><rect x="212" y="23" width="10" height="11" fill="#a0a0a0"/><rect x="217" y="28" width="1" height="6" fill="#6a6a6a"/><rect x="212" y="23" width="2" height="4" fill="#c8c8c8"/><rect x="211" y="34" width="3" height="11" fill="#f0f0f0"/><rect x="220" y="34" width="3" height="9" fill="#f0f0f0"/><rect x="211" y="37" width="1" height="3" fill="#d89010"/><rect x="222" y="36" width="1" height="3" fill="#d89010"/><rect x="210" y="45" width="4" height="2" fill="#505050"/><rect x="220" y="43" width="4" height="2" fill="#505050"/><rect x="264" y="5" width="6" height="6" fill="#c87818"/><rect x="266" y="11" width="2" height="1" fill="#c0c0c0"/><rect x="261" y="12" width="12" height="4" fill="#00a4a8"/><rect x="262" y="16" width="10" height="7" fill="#00a4a8"/><rect x="261" y="12" width="2" height="6" fill="#505050"/><rect x="271" y="12" width="2" height="6" fill="#505050"/><path d="M260.5 16 L259 27" stroke="#f0f0f0" stroke-width="1.8"/><path d="M273.5 16 L275 27" stroke="#f0f0f0" stroke-width="1.8"/><rect x="258" y="26" width="2" height="2" fill="#d89010"/><rect x="274" y="26" width="2" height="2" fill="#d89010"/><rect x="262" y="23" width="10" height="11" fill="#a0a0a0"/><rect x="267" y="28" width="1" height="6" fill="#6a6a6a"/><rect x="262" y="23" width="2" height="4" fill="#c8c8c8"/><rect x="262" y="34" width="3" height="11" fill="#f0f0f0"/><rect x="269" y="34" width="3" height="10" fill="#f0f0f0"/><rect x="262" y="37" width="1" height="3" fill="#d89010"/><rect x="271" y="36" width="1" height="3" fill="#d89010"/><rect x="261" y="45" width="4" height="2" fill="#505050"/><rect x="269" y="44" width="4" height="2" fill="#505050"/><rect x="314" y="5" width="6" height="6" fill="#c87818"/><rect x="316" y="11" width="2" height="1" fill="#c0c0c0"/><rect x="311" y="12" width="12" height="4" fill="#00a4a8"/><rect x="312" y="16" width="10" height="7" fill="#00a4a8"/><rect x="311" y="12" width="2" height="6" fill="#505050"/><rect x="321" y="12" width="2" height="6" fill="#505050"/><path d="M310.5 16 L309 27" stroke="#f0f0f0" stroke-width="1.8"/><path d="M323.5 16 L325 27" stroke="#f0f0f0" stroke-width="1.8"/><rect x="308" y="26" width="2" height="2" fill="#d89010"/><rect x="324" y="26" width="2" height="2" fill="#d89010"/><rect x="312" y="23" width="10" height="11" fill="#a0a0a0"/><rect x="317" y="28" width="1" height="6" fill="#6a6a6a"/><rect x="312" y="23" width="2" height="4" fill="#c8c8c8"/><rect x="313" y="34" width="3" height="11" fill="#f0f0f0"/><rect x="318" y="34" width="3" height="11" fill="#f0f0f0"/><rect x="313" y="37" width="1" height="3" fill="#d89010"/><rect x="320" y="36" width="1" height="3" fill="#d89010"/><rect x="312" y="45" width="4" height="2" fill="#505050"/><rect x="318" y="45" width="4" height="2" fill="#505050"/><rect x="364" y="5" width="6" height="6" fill="#c87818"/><rect x="366" y="11" width="2" height="1" fill="#c0c0c0"/><rect x="361" y="12" width="12" height="4" fill="#00a4a8"/><rect x="362" y="16" width="10" height="7" fill="#00a4a8"/><rect x="361" y="12" width="2" height="6" fill="#505050"/><rect x="371" y="12" width="2" height="6" fill="#505050"/><path d="M360.5 16 L359 27" stroke="#f0f0f0" stroke-width="1.8"/><path d="M373.5 16 L375 27" stroke="#f0f0f0" stroke-width="1.8"/><rect x="358" y="26" width="2" height="2" fill="#d89010"/><rect x="374" y="26" width="2" height="2" fill="#d89010"/><rect x="362" y="23" width="10" height="11" fill="#a0a0a0"/><rect x="367" y="28" width="1" height="6" fill="#6a6a6a"/><rect x="362" y="23" width="2" height="4" fill="#c8c8c8"/><rect x="362" y="34" width="3" height="11" fill="#f0f0f0"/><rect x="369" y="34" width="3" height="10" fill="#f0f0f0"/><rect x="362" y="37" width="1" height="3" fill="#d89010"/><rect x="371" y="36" width="1" height="3" fill="#d89010"/><rect x="361" y="45" width="4" height="2" fill="#505050"/><rect x="369" y="44" width="4" height="2" fill="#505050"/><rect x="414" y="5" width="6" height="6" fill="#c87818"/><rect x="416" y="11" width="2" height="1" fill="#c0c0c0"/><rect x="411" y="12" width="12" height="4" fill="#00a4a8"/><rect x="412" y="16" width="10" height="7" fill="#00a4a8"/><rect x="411" y="12" width="2" height="6" fill="#505050"/><rect x="421" y="12" width="2" height="6" fill="#505050"/><path d="M410.5 16 L409 27" stroke="#f0f0f0" stroke-width="1.8"/><path d="M423.5 16 L425 27" stroke="#f0f0f0" stroke-width="1.8"/><rect x="408" y="26" width="2" height="2" fill="#d89010"/><rect x="424" y="26" width="2" height="2" fill="#d89010"/><rect x="412" y="23" width="10" height="11" fill="#a0a0a0"/><rect x="417" y="28" width="1" height="6" fill="#6a6a6a"/><rect x="412" y="23" width="2" height="4" fill="#c8c8c8"/><rect x="411" y="34" width="3" height="11" fill="#f0f0f0"/><rect x="420" y="34" width="3" height="9" fill="#f0f0f0"/><rect x="411" y="37" width="1" height="3" fill="#d89010"/><rect x="422" y="36" width="1" height="3" fill="#d89010"/><rect x="410" y="45" width="4" height="2" fill="#505050"/><rect x="420" y="43" width="4" height="2" fill="#505050"/><rect x="464" y="5" width="6" height="6" fill="#c87818"/><rect x="466" y="11" width="2" height="1" fill="#c0c0c0"/><rect x="461" y="12" width="12" height="4" fill="#00a4a8"/><rect x="462" y="16" width="10" height="7" fill="#00a4a8"/><rect x="461" y="12" width="2" height="6" fill="#505050"/><rect x="471" y="12" width="2" height="6" fill="#505050"/><path d="M460.5 16 L459 27" stroke="#f0f0f0" stroke-width="1.8"/><path d="M473.5 16 L475 27" stroke="#f0f0f0" stroke-width="1.8"/><rect x="458" y="26" width="2" height="2" fill="#d89010"/><rect x="474" y="26" width="2" height="2" fill="#d89010"/><rect x="462" y="23" width="10" height="11" fill="#a0a0a0"/><rect x="467" y="28" width="1" height="6" fill="#6a6a6a"/><rect x="462" y="23" width="2" height="4" fill="#c8c8c8"/><rect x="462" y="34" width="3" height="11" fill="#f0f0f0"/><rect x="469" y="34" width="3" height="10" fill="#f0f0f0"/><rect x="462" y="37" width="1" height="3" fill="#d89010"/><rect x="471" y="36" width="1" height="3" fill="#d89010"/><rect x="461" y="45" width="4" height="2" fill="#505050"/><rect x="469" y="44" width="4" height="2" fill="#505050"/></svg>
</div>
<div class="t" style="left:312px;top:582px;">DLY:0</div>
<div class="t" style="left:362px;top:582px;">DLY:0</div>
<div class="t" style="left:412px;top:582px;">DLY:0</div>
<div class="t" style="left:462px;top:582px;">DLY:0</div>
<div class="t" style="left:512px;top:582px;">DLY:0</div>
<div class="t" style="left:562px;top:582px;">DLY:0</div>
<div class="t" style="left:612px;top:582px;">DLY:0</div>
<div class="t" style="left:662px;top:582px;">DLY:0</div>
<div class="t" style="left:712px;top:582px;">DLY:0</div>
<div class="t" style="left:762px;top:582px;">DLY:0</div>
<div class="t" style="left:303px;top:609px;">Loop 4 (down-right)</div>
</div>
<div class="sbv" style="left:778px;top:134px;width:15px;height:481px"></div>
<svg class="a" style="left:781px;top:139px" width="9" height="6"><path d="M0.5 5 L4.5 1 L8.5 5 Z" fill="#303030"/></svg>
<div class="thumbv" style="left:778px;top:152px;width:15px;height:219px"></div>
<div class="a" style="left:782px;top:258px;width:7px;height:1px;background:#606060;box-shadow:0 2px 0 #606060,0 4px 0 #606060"></div>
<svg class="a" style="left:781px;top:603px" width="9" height="6"><path d="M0.5 1 L4.5 5 L8.5 1 Z" fill="#303030"/></svg>
<div class="a" style="left:301px;top:617px;width:476px;height:15px;background:linear-gradient(180deg,#e6e6e6,#f0f0f0 40%,#f0f0f0 60%,#e6e6e6)"></div>
<svg class="a" style="left:306px;top:620px" width="6" height="9"><path d="M5 0.5 L1 4.5 L5 8.5 Z" fill="#303030"/></svg>
<div class="thumbh" style="left:327px;top:617px;width:374px;height:15px"></div>
<div class="a" style="left:510px;top:621px;width:1px;height:7px;background:#606060;box-shadow:2px 0 0 #606060,4px 0 0 #606060"></div>
<svg class="a" style="left:766px;top:620px" width="6" height="9"><path d="M1 0.5 L5 4.5 L1 8.5 Z" fill="#303030"/></svg>
<div class="a" style="left:800px;top:77px;width:237px;height:312px;border:1px solid #828790;background:#fff;overflow:hidden">
</div>
<div class="a" style="left:801px;top:78px;width:218px;height:309px;overflow:hidden">
<div class="dv" style="left:12px;top:0px;height:310px"></div>
<div class="dv" style="left:31px;top:64px;height:246px"></div>
<div class="dh" style="left:13px;top:9px;width:9px"></div>
<div class="pb" style="left:8px;top:5px"><div class="a" style="left:1px;top:3px;width:5px;height:1px;background:#2040a0"></div><div class="a" style="left:3px;top:1px;width:1px;height:5px;background:#2040a0"></div></div>
<div class="a" style="left:23px;top:3px;line-height:0"><svg width="16" height="12" viewBox="0 0 16 12"><rect x="0.5" y="0.5" width="15" height="11" rx="2" fill="#1c4c9c" stroke="#0c2c6c"/><text x="1.5" y="9.5" font-family="Liberation Mono" font-size="10" font-weight="bold" fill="#fff" textLength="13" lengthAdjust="spacingAndGlyphs">GUI</text></svg></div>
<div class="t" style="left:44px;top:3px;letter-spacing:-.45px;">GUIs</div>
<div class="dh" style="left:13px;top:25px;width:9px"></div>
<div class="pb" style="left:8px;top:21px"><div class="a" style="left:1px;top:3px;width:5px;height:1px;background:#2040a0"></div><div class="a" style="left:3px;top:1px;width:1px;height:5px;background:#2040a0"></div></div>
<div class="a" style="left:23px;top:17px;line-height:0"><svg width="16" height="16" viewBox="0 0 16 16"><rect x="5" y="4" width="7" height="8" fill="#d8d8d8"/><circle cx="5" cy="5" r="3.5" fill="#f0d040" stroke="#a07810"/><path d="M7 7 L13 13 L11 15 M10 10 L8 12" stroke="#a07810" stroke-width="2.4" fill="none"/><path d="M7 7 L13 13" stroke="#f0d040" stroke-width="1.2"/></svg></div>
<div class="t" style="left:44px;top:19px;">Inventory items</div>
<div class="dh" style="left:13px;top:41px;width:9px"></div>
<div class="pb" style="left:8px;top:37px"><div class="a" style="left:1px;top:3px;width:5px;height:1px;background:#2040a0"></div><div class="a" style="left:3px;top:1px;width:1px;height:5px;background:#2040a0"></div></div>
<div class="a" style="left:23px;top:33px;line-height:0"><svg width="16" height="16" viewBox="0 0 16 16"><ellipse cx="8" cy="6.5" rx="7.3" ry="5.3" fill="#c8e0f8" stroke="#4080c8"/><path d="M4 11 L3 15 L8 11.5" fill="#c8e0f8" stroke="#4080c8"/><rect x="7" y="3" width="2" height="4" fill="#2050a0"/><rect x="7" y="8" width="2" height="1.5" fill="#2050a0"/></svg></div>
<div class="t" style="left:44px;top:35px;">Dialogs</div>
<div class="dh" style="left:13px;top:57px;width:9px"></div>
<div class="pb" style="left:8px;top:53px"><div class="a" style="left:1px;top:3px;width:5px;height:1px;background:#2040a0"></div></div>
<div class="a" style="left:23px;top:52px;line-height:0"><svg width="16" height="10" viewBox="0 0 16 10"><ellipse cx="4" cy="6.5" rx="3.2" ry="2.8" fill="#b8a078" stroke="#6a4a20"/><ellipse cx="12" cy="6.5" rx="3.2" ry="2.8" fill="#b8a078" stroke="#6a4a20"/><path d="M1 5.5 L3.5 1.5 M15 5.5 L12.5 1.5 M7 5.5 L9 5.5" stroke="#6a4a20" fill="none"/></svg></div>
<div class="t" style="left:44px;top:51px;">Views</div>
<div class="dh" style="left:32px;top:73px;width:10px"></div>
<div class="pb" style="left:27px;top:69px"><div class="a" style="left:1px;top:3px;width:5px;height:1px;background:#2040a0"></div><div class="a" style="left:3px;top:1px;width:1px;height:5px;background:#2040a0"></div></div>
<div class="a" style="left:43px;top:66px;line-height:0"><svg width="16" height="14" viewBox="0 0 16 14"><path d="M1.5 2.5 L6 2.5 L7 4 L14.5 4 L14.5 12.5 L1.5 12.5 Z" fill="#e0a850" stroke="#906020"/><path d="M2 5 L14 5 L14 12 L2 12 Z" fill="#c88838"/><path d="M14 6 L6 12" stroke="#e8b868" stroke-width="1.2"/></svg></div>
<div class="t" style="left:63px;top:67px;">Imported chars</div>
<div class="dh" style="left:32px;top:89px;width:10px"></div>
<div class="pb" style="left:27px;top:85px"><div class="a" style="left:1px;top:3px;width:5px;height:1px;background:#2040a0"></div><div class="a" style="left:3px;top:1px;width:1px;height:5px;background:#2040a0"></div></div>
<div class="a" style="left:43px;top:82px;line-height:0"><svg width="16" height="14" viewBox="0 0 16 14"><path d="M1.5 2.5 L6 2.5 L7 4 L14.5 4 L14.5 12.5 L1.5 12.5 Z" fill="#e0a850" stroke="#906020"/><path d="M2 5 L14 5 L14 12 L2 12 Z" fill="#c88838"/><path d="M14 6 L6 12" stroke="#e8b868" stroke-width="1.2"/></svg></div>
<div class="t" style="left:63px;top:83px;">My folder</div>
<div class="dh" style="left:32px;top:105px;width:10px"></div>
<div class="a" style="left:43px;top:100px;line-height:0"><svg width="16" height="10" viewBox="0 0 16 10"><ellipse cx="4" cy="6.5" rx="3.2" ry="2.8" fill="#e0e0e0" stroke="#8a8a8a"/><ellipse cx="12" cy="6.5" rx="3.2" ry="2.8" fill="#e0e0e0" stroke="#8a8a8a"/><path d="M1 5.5 L3.5 1.5 M15 5.5 L12.5 1.5 M7 5.5 L9 5.5" stroke="#8a8a8a" fill="none"/></svg></div>
<div class="a" style="left:61px;top:97px;width:116px;height:16px;background:#ebebeb;border:1px solid #e4e4e4"></div>
<div class="t" style="left:63px;top:99px;letter-spacing:-.45px;">1: MAINWALKINGVIEW</div>
<div class="dh" style="left:32px;top:121px;width:10px"></div>
<div class="a" style="left:43px;top:116px;line-height:0"><svg width="16" height="10" viewBox="0 0 16 10"><ellipse cx="4" cy="6.5" rx="3.2" ry="2.8" fill="#e0e0e0" stroke="#8a8a8a"/><ellipse cx="12" cy="6.5" rx="3.2" ry="2.8" fill="#e0e0e0" stroke="#8a8a8a"/><path d="M1 5.5 L3.5 1.5 M15 5.5 L12.5 1.5 M7 5.5 L9 5.5" stroke="#8a8a8a" fill="none"/></svg></div>
<div class="t" style="left:63px;top:115px;letter-spacing:-.45px;">2: VIEW2</div>
<div class="dh" style="left:32px;top:137px;width:10px"></div>
<div class="a" style="left:43px;top:132px;line-height:0"><svg width="16" height="10" viewBox="0 0 16 10"><ellipse cx="4" cy="6.5" rx="3.2" ry="2.8" fill="#e0e0e0" stroke="#8a8a8a"/><ellipse cx="12" cy="6.5" rx="3.2" ry="2.8" fill="#e0e0e0" stroke="#8a8a8a"/><path d="M1 5.5 L3.5 1.5 M15 5.5 L12.5 1.5 M7 5.5 L9 5.5" stroke="#8a8a8a" fill="none"/></svg></div>
<div class="t" style="left:63px;top:131px;letter-spacing:-.45px;">3: VIEW3</div>
<div class="dh" style="left:32px;top:153px;width:10px"></div>
<div class="a" style="left:43px;top:148px;line-height:0"><svg width="16" height="10" viewBox="0 0 16 10"><ellipse cx="4" cy="6.5" rx="3.2" ry="2.8" fill="#e0e0e0" stroke="#8a8a8a"/><ellipse cx="12" cy="6.5" rx="3.2" ry="2.8" fill="#e0e0e0" stroke="#8a8a8a"/><path d="M1 5.5 L3.5 1.5 M15 5.5 L12.5 1.5 M7 5.5 L9 5.5" stroke="#8a8a8a" fill="none"/></svg></div>
<div class="t" style="left:63px;top:147px;letter-spacing:-.45px;">5: VIEW5</div>
<div class="dh" style="left:32px;top:169px;width:10px"></div>
<div class="a" style="left:43px;top:164px;line-height:0"><svg width="16" height="10" viewBox="0 0 16 10"><ellipse cx="4" cy="6.5" rx="3.2" ry="2.8" fill="#e0e0e0" stroke="#8a8a8a"/><ellipse cx="12" cy="6.5" rx="3.2" ry="2.8" fill="#e0e0e0" stroke="#8a8a8a"/><path d="M1 5.5 L3.5 1.5 M15 5.5 L12.5 1.5 M7 5.5 L9 5.5" stroke="#8a8a8a" fill="none"/></svg></div>
<div class="t" style="left:63px;top:163px;letter-spacing:-.45px;">6: VIEW6</div>
<div class="dh" style="left:32px;top:185px;width:10px"></div>
<div class="a" style="left:43px;top:180px;line-height:0"><svg width="16" height="10" viewBox="0 0 16 10"><ellipse cx="4" cy="6.5" rx="3.2" ry="2.8" fill="#e0e0e0" stroke="#8a8a8a"/><ellipse cx="12" cy="6.5" rx="3.2" ry="2.8" fill="#e0e0e0" stroke="#8a8a8a"/><path d="M1 5.5 L3.5 1.5 M15 5.5 L12.5 1.5 M7 5.5 L9 5.5" stroke="#8a8a8a" fill="none"/></svg></div>
<div class="t" style="left:63px;top:179px;letter-spacing:-.45px;">7: DARLING</div>
<div class="dh" style="left:32px;top:201px;width:10px"></div>
<div class="a" style="left:43px;top:196px;line-height:0"><svg width="16" height="10" viewBox="0 0 16 10"><ellipse cx="4" cy="6.5" rx="3.2" ry="2.8" fill="#e0e0e0" stroke="#8a8a8a"/><ellipse cx="12" cy="6.5" rx="3.2" ry="2.8" fill="#e0e0e0" stroke="#8a8a8a"/><path d="M1 5.5 L3.5 1.5 M15 5.5 L12.5 1.5 M7 5.5 L9 5.5" stroke="#8a8a8a" fill="none"/></svg></div>
<div class="t" style="left:63px;top:195px;letter-spacing:-.45px;">8: SWIMMING</div>
<div class="dh" style="left:32px;top:217px;width:10px"></div>
<div class="a" style="left:43px;top:212px;line-height:0"><svg width="16" height="10" viewBox="0 0 16 10"><ellipse cx="4" cy="6.5" rx="3.2" ry="2.8" fill="#e0e0e0" stroke="#8a8a8a"/><ellipse cx="12" cy="6.5" rx="3.2" ry="2.8" fill="#e0e0e0" stroke="#8a8a8a"/><path d="M1 5.5 L3.5 1.5 M15 5.5 L12.5 1.5 M7 5.5 L9 5.5" stroke="#8a8a8a" fill="none"/></svg></div>
<div class="t" style="left:63px;top:211px;letter-spacing:-.45px;">9: EXPLOSION</div>
<div class="dh" style="left:32px;top:233px;width:10px"></div>
<div class="a" style="left:43px;top:228px;line-height:0"><svg width="16" height="10" viewBox="0 0 16 10"><ellipse cx="4" cy="6.5" rx="3.2" ry="2.8" fill="#e0e0e0" stroke="#8a8a8a"/><ellipse cx="12" cy="6.5" rx="3.2" ry="2.8" fill="#e0e0e0" stroke="#8a8a8a"/><path d="M1 5.5 L3.5 1.5 M15 5.5 L12.5 1.5 M7 5.5 L9 5.5" stroke="#8a8a8a" fill="none"/></svg></div>
<div class="t" style="left:63px;top:227px;letter-spacing:-.45px;">10: VIEW10</div>
<div class="dh" style="left:32px;top:249px;width:10px"></div>
<div class="a" style="left:43px;top:244px;line-height:0"><svg width="16" height="10" viewBox="0 0 16 10"><ellipse cx="4" cy="6.5" rx="3.2" ry="2.8" fill="#e0e0e0" stroke="#8a8a8a"/><ellipse cx="12" cy="6.5" rx="3.2" ry="2.8" fill="#e0e0e0" stroke="#8a8a8a"/><path d="M1 5.5 L3.5 1.5 M15 5.5 L12.5 1.5 M7 5.5 L9 5.5" stroke="#8a8a8a" fill="none"/></svg></div>
<div class="t" style="left:63px;top:243px;letter-spacing:-.45px;">17: VIEW17</div>
<div class="dh" style="left:32px;top:265px;width:10px"></div>
<div class="a" style="left:43px;top:260px;line-height:0"><svg width="16" height="10" viewBox="0 0 16 10"><ellipse cx="4" cy="6.5" rx="3.2" ry="2.8" fill="#e0e0e0" stroke="#8a8a8a"/><ellipse cx="12" cy="6.5" rx="3.2" ry="2.8" fill="#e0e0e0" stroke="#8a8a8a"/><path d="M1 5.5 L3.5 1.5 M15 5.5 L12.5 1.5 M7 5.5 L9 5.5" stroke="#8a8a8a" fill="none"/></svg></div>
<div class="t" style="left:63px;top:259px;">24: cDavy1Walking</div>
<div class="dh" style="left:32px;top:281px;width:10px"></div>
<div class="a" style="left:43px;top:276px;line-height:0"><svg width="16" height="10" viewBox="0 0 16 10"><ellipse cx="4" cy="6.5" rx="3.2" ry="2.8" fill="#e0e0e0" stroke="#8a8a8a"/><ellipse cx="12" cy="6.5" rx="3.2" ry="2.8" fill="#e0e0e0" stroke="#8a8a8a"/><path d="M1 5.5 L3.5 1.5 M15 5.5 L12.5 1.5 M7 5.5 L9 5.5" stroke="#8a8a8a" fill="none"/></svg></div>
<div class="t" style="left:63px;top:275px;">25: cDavy1Talking</div>
<div class="dh" style="left:32px;top:297px;width:10px"></div>
<div class="a" style="left:43px;top:292px;line-height:0"><svg width="16" height="10" viewBox="0 0 16 10"><ellipse cx="4" cy="6.5" rx="3.2" ry="2.8" fill="#e0e0e0" stroke="#8a8a8a"/><ellipse cx="12" cy="6.5" rx="3.2" ry="2.8" fill="#e0e0e0" stroke="#8a8a8a"/><path d="M1 5.5 L3.5 1.5 M15 5.5 L12.5 1.5 M7 5.5 L9 5.5" stroke="#8a8a8a" fill="none"/></svg></div>
<div class="t" style="left:63px;top:291px;">14: Garf1Idle</div>
<div class="dh" style="left:32px;top:313px;width:10px"></div>
<div class="a" style="left:43px;top:308px;line-height:0"><svg width="16" height="10" viewBox="0 0 16 10"><ellipse cx="4" cy="6.5" rx="3.2" ry="2.8" fill="#e0e0e0" stroke="#8a8a8a"/><ellipse cx="12" cy="6.5" rx="3.2" ry="2.8" fill="#e0e0e0" stroke="#8a8a8a"/><path d="M1 5.5 L3.5 1.5 M15 5.5 L12.5 1.5 M7 5.5 L9 5.5" stroke="#8a8a8a" fill="none"/></svg></div>
<div class="t" style="left:63px;top:307px;">26: Garf1Walk</div>
</div>
<div class="sbv" style="left:1019px;top:78px;width:17px;height:310px"></div>
<svg class="a" style="left:1023px;top:84px" width="9" height="6"><path d="M0.5 5 L4.5 1 L8.5 5 Z" fill="#303030"/></svg>
<div class="thumbv" style="left:1020px;top:132px;width:14px;height:131px"></div>
<div class="a" style="left:1024px;top:195px;width:7px;height:1px;background:#606060;box-shadow:0 2px 0 #606060,0 4px 0 #606060"></div>
<svg class="a" style="left:1023px;top:376px" width="9" height="6"><path d="M0.5 1 L4.5 5 L8.5 1 Z" fill="#303030"/></svg>
<div class="a" style="left:800px;top:393px;width:237px;height:21px;border:1px solid #a8a8a8;border-radius:3px;background:#f3f3f3"></div>
<svg class="a" style="left:1023px;top:401px" width="9" height="5"><path d="M0.5 0.5 L4.5 4.5 L8.5 0.5 Z" fill="#909090"/></svg>
<div class="a" style="left:802px;top:417px;width:23px;height:20px;border:1px solid #4a4a4a;border-radius:3px;background:linear-gradient(180deg,#e4e4e4,#c8c8c8)"></div>
<svg class="a" style="left:804px;top:419px" width="19" height="17" viewBox="0 0 19 17"><rect x="2.5" y="2.5" width="5" height="5" fill="#fff" stroke="#3a8ad8"/><rect x="2.5" y="10.5" width="5" height="5" fill="#fff" stroke="#3a8ad8"/><path d="M3.5 5 H6.5 M5 3.5 V6.5 M3.5 13 H6.5 M5 11.5 V14.5" stroke="#000"/><path d="M9 3.5 H12 M9 12.5 H12" stroke="#303030"/><path d="M9 6.5 H17 M9 8.5 H17 M9 14.5 H17" stroke="#40a0a0" stroke-dasharray="2 1"/></svg>
<svg class="a" style="left:827px;top:418px" width="17" height="19" viewBox="0 0 17 19"><text x="1" y="9" font-family="Liberation Serif" font-size="10" font-weight="bold" fill="#2040c0">A</text><text x="1" y="18" font-family="Liberation Serif" font-size="10" font-weight="bold" fill="#b02020">Z</text><path d="M12.5 1 V16 M10 12.5 L12.5 16.5 L15 12.5" stroke="#000" fill="none" stroke-width="1.2"/></svg>
<div class="a" style="left:850px;top:418px;width:1px;height:19px;background:#b8b8b8"></div>
<svg class="a" style="left:857px;top:420px" width="16" height="15" viewBox="0 0 16 15"><rect x="0.5" y="0.5" width="15" height="14" fill="#e4e4e4" stroke="#a8a8a8"/><rect x="2.5" y="3.5" width="11" height="9" fill="#f0f0f0" stroke="#b8b8b8"/><rect x="4" y="6" width="7" height="3" fill="#c8c8c8"/></svg>
<div class="a" style="left:800px;top:440px;width:236px;height:131px;border:1px solid #a0a0a0;background:#fff"></div>
<div class="a" style="left:801px;top:441px;width:234px;height:18px;background:#f0f4f8"></div>
<div class="a" style="left:801px;top:459px;width:14px;height:33px;background:#f0f4f8"></div>
<div class="a" style="left:803px;top:445px;width:10px;height:10px;border:1px solid #000;background:#fff"><div class="a" style="left:1px;top:3px;width:6px;height:2px;background:#000"></div></div>
<div class="t" style="left:819px;top:444px;font-weight:bold">Diseño</div>
<div class="a" style="left:909px;top:459px;width:1px;height:33px;background:#f0f0f0"></div>
<div class="a" style="left:815px;top:475px;width:220px;height:1px;background:#f0f0f0"></div>
<div class="a" style="left:815px;top:476px;width:94px;height:16px;background:#3399ff"></div>
<div class="t" style="left:818px;top:461px;color:#808080">ID</div>
<div class="t" style="left:915px;top:461px;color:#808080">1</div>
<div class="t" style="left:818px;top:478px;color:#fff">Name</div>
<div class="t" style="left:915px;top:478px;font-weight:bold">MAINWALKINGVIEW</div>
<div class="a" style="left:800px;top:575px;width:236px;height:58px;border:1px solid #a0a0a0;background:#f0f0f0"></div>
<div class="t" style="left:806px;top:578px;font-weight:bold">Name</div>
<div class="t" style="left:806px;top:594px;">The script name of the view</div>
<div class="a" style="left:8px;top:633px;width:1029px;height:1px;background:#a0a0a0"></div>
<div class="a" style="left:8px;top:634px;width:1029px;height:21px;background:#efebea;border-top:1px solid #fff;border-bottom:1px solid #fff"></div>
<div class="a" style="left:1032px;top:642px;width:2px;height:2px;background:#98a4b4;box-shadow:1px 1px 0 #fff"></div><div class="a" style="left:1028px;top:646px;width:2px;height:2px;background:#98a4b4;box-shadow:1px 1px 0 #fff"></div><div class="a" style="left:1032px;top:646px;width:2px;height:2px;background:#98a4b4;box-shadow:1px 1px 0 #fff"></div><div class="a" style="left:1024px;top:650px;width:2px;height:2px;background:#98a4b4;box-shadow:1px 1px 0 #fff"></div><div class="a" style="left:1028px;top:650px;width:2px;height:2px;background:#98a4b4;box-shadow:1px 1px 0 #fff"></div><div class="a" style="left:1032px;top:650px;width:2px;height:2px;background:#98a4b4;box-shadow:1px 1px 0 #fff"></div>
<div class="t" style="left:425px;top:311px;font-family:&quot;Liberation Serif&quot;,serif;font-size:30px;line-height:34px;color:rgba(128,128,128,.45)">programy.net.<span style="color:rgba(100,120,200,.45)">pl</span></div>
<div class="t" style="left:4px;top:-2px;font-family:&quot;Liberation Serif&quot;,serif;font-size:30px;line-height:34px;color:rgba(160,160,160,.55);-webkit-text-stroke:1px rgba(120,120,120,.3);text-shadow:1px 1px 0 rgba(255,255,255,.45);font-size:31px">programy.net.<span style="color:rgba(150,190,230,.7);-webkit-text-stroke:1px rgba(120,170,220,.6)">pl</span></div>
<div class="t" style="left:849px;top:627px;font-family:&quot;Liberation Serif&quot;,serif;font-size:30px;line-height:34px;color:rgba(205,205,205,.8);-webkit-text-stroke:1px rgba(140,140,140,.7);text-shadow:1px 1px 0 rgba(255,255,255,.6);font-size:31px">programy.net.<span style="color:rgba(150,180,220,.45);-webkit-text-stroke:1px rgba(120,170,220,.6)">pl</span></div>
<div class="t" style="left:30px;top:8px;font-size:12px">!!:/- Chris Kwest -\:!! - AGS Editor</div>
<svg class="a" style="left:9px;top:6px" width="16" height="16" viewBox="0 0 16 16"><path d="M11 5 Q15.5 5 15 9 Q14.5 12.5 11 12" fill="none" stroke="#1a2a9a" stroke-width="2"/><path d="M1.5 3 L1.5 13 Q1.5 15.5 6.5 15.5 Q11.5 15.5 11.5 13 L11.5 3 Z" fill="#2838b8"/><ellipse cx="6.5" cy="3" rx="5" ry="2.2" fill="#1a2488"/><path d="M3 5 L3 12" stroke="#6a7ae8" stroke-width="1.5"/><rect x="6" y="8" width="3" height="4" fill="#e8d870"/></svg>
</body></html>
